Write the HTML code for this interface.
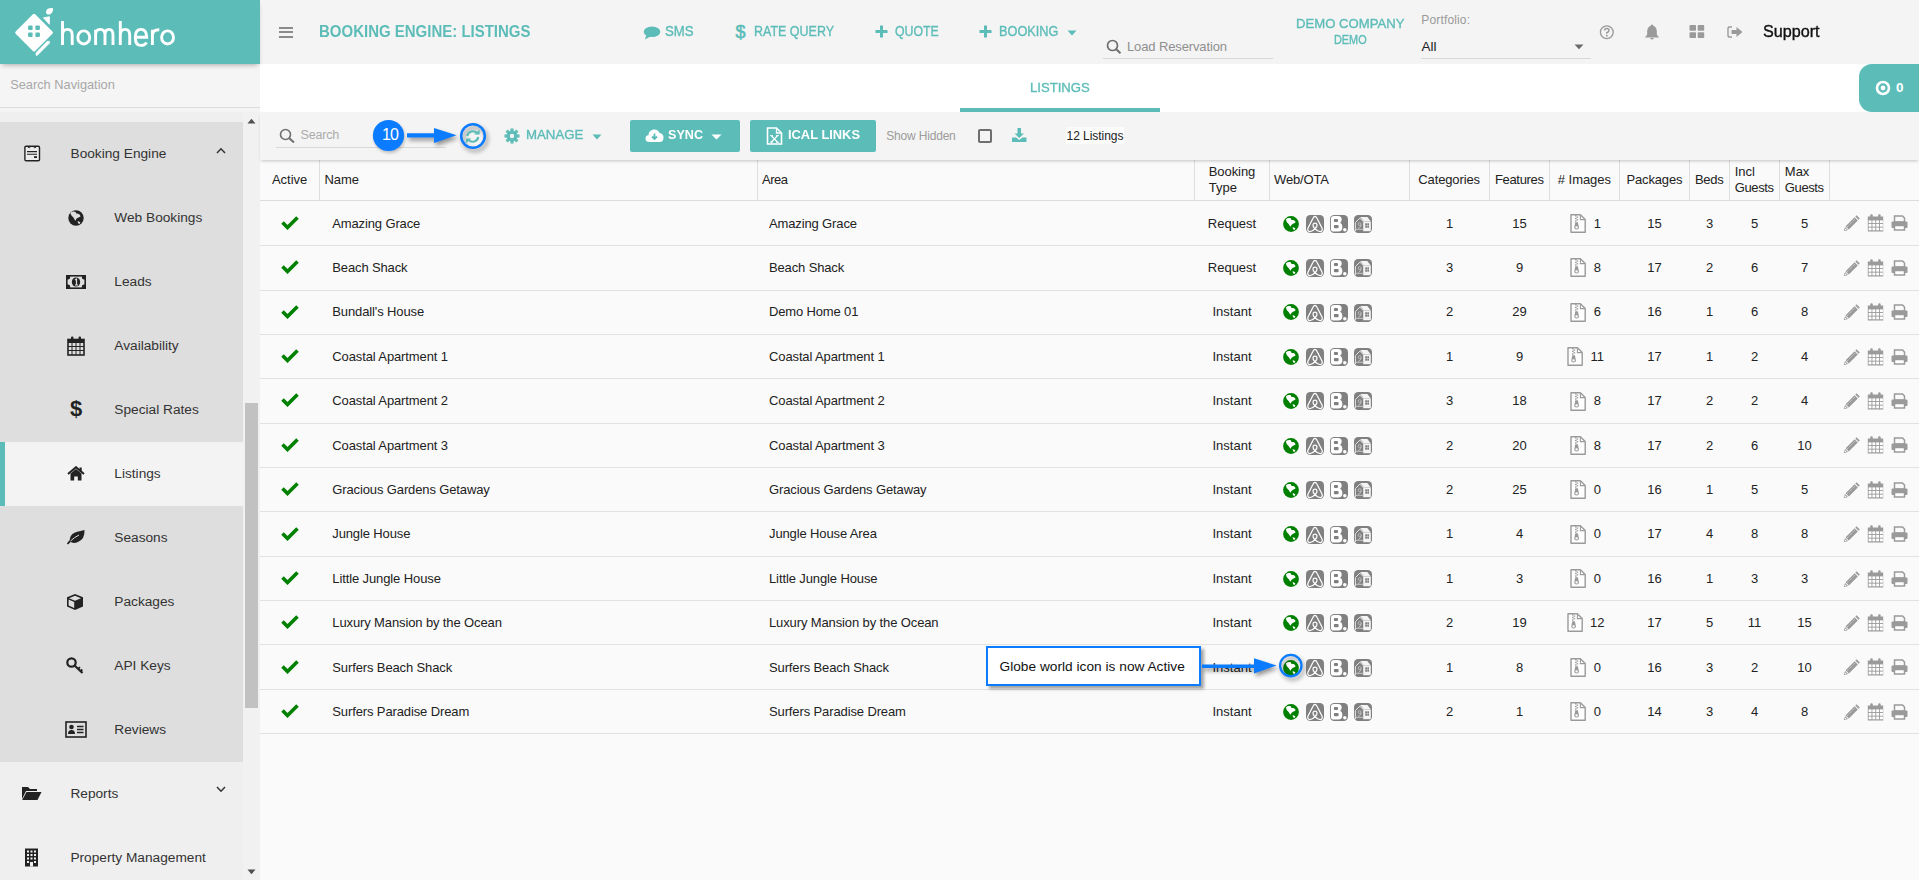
<!DOCTYPE html><html><head><meta charset="utf-8"><style>
html,body{margin:0;padding:0;}
body{width:1919px;height:880px;overflow:hidden;position:relative;background:#fafafa;font-family:"Liberation Sans",sans-serif;}
.a{position:absolute;display:block;}
.t{position:absolute;white-space:nowrap;line-height:1;}
</style></head><body>

<div class="a" style="left:260px;top:0px;width:1659px;height:64px;background:#f4f4f4;"></div>
<div class="a" style="left:260px;top:64px;width:1659px;height:48px;background:#ffffff;"></div>
<div class="a" style="left:260px;top:112px;width:1659px;height:48px;background:#f4f4f4;box-shadow:0 2px 3px -1px rgba(0,0,0,0.22);z-index:2;"></div>
<div class="a" style="left:260px;top:160px;width:1659px;height:720px;background:#fafafa;"></div>
<div class="a" style="left:0px;top:64px;width:260px;height:816px;background:#f5f5f5;"></div>
<div class="a" style="left:0px;top:107px;width:260px;height:1px;background:#dcdcdc;"></div>
<div class="a" style="left:0px;top:108px;width:260px;height:772px;background:#f4f4f4;"></div>
<div class="a" style="left:0px;top:112px;width:243px;height:768px;background:#efefef;"></div>
<div class="a" style="left:0px;top:122px;width:243px;height:640px;background:#dedede;"></div>
<div class="a" style="left:0px;top:442px;width:243px;height:64px;background:#f3f3f3;"></div>
<div class="a" style="left:0px;top:442px;width:5px;height:64px;background:#5cbcb8;"></div>
<div class="a" style="left:243px;top:112px;width:17px;height:768px;background:#f1f1f1;"></div>
<div class="a" style="left:245px;top:403px;width:13px;height:305px;background:#c1c1c1;"></div>
<svg class="a" style="left:247px;top:118px;" width="9" height="6" viewBox="0 0 9 6"><path d="M0.5 5.5 L4.5 0.8 L8.5 5.5Z" fill="#505050"/></svg>
<svg class="a" style="left:247px;top:869px;" width="9" height="6" viewBox="0 0 9 6"><path d="M0.5 0.5 L4.5 5.2 L8.5 0.5Z" fill="#505050"/></svg>
<div class="a" style="left:0px;top:0px;width:260px;height:64px;background:#5cbcb8;box-shadow:0 3px 5px -2px rgba(0,0,0,0.3);z-index:3;"></div>
<svg class="a" style="left:0;top:0;z-index:4" width="260" height="64" viewBox="0 0 260 64">
<path d="M16.8 32.6 L34.05 15.35 L51.3 32.6 L34.05 49.85 Z" fill="#fff" stroke="#fff" stroke-width="3.2" stroke-linejoin="round"/>
<path d="M43.4 17.8 L49.4 16.7 L49.4 24.3 Z" fill="#fff" stroke="#fff" stroke-width="0.8" stroke-linejoin="round"/>
<path d="M46.2 13.6 Q45.4 9.6 48.4 8.4 Q51 7.6 53.1 8.2 Q53.4 12.4 50.1 14.3 Q47.8 15.1 46.2 13.6Z" fill="#fff"/>
<path d="M47.2 41.3 L49.6 41.3 L49.6 43.1 L37.4 55.3 Q36.3 56.3 36 55 L36 52.7 Z" fill="#fff" stroke="#fff" stroke-width="0.6" stroke-linejoin="round"/>
<rect x="28.1" y="25.6" width="4.5" height="4.5" rx="1" fill="#5cbcb8"/>
<rect x="35.4" y="25.6" width="4.5" height="4.5" rx="1" fill="#5cbcb8"/>
<rect x="28.1" y="32.6" width="4.5" height="4.5" rx="1" fill="#5cbcb8"/>
<rect x="35.4" y="32.6" width="4.5" height="4.5" rx="1" fill="#5cbcb8"/>
<g fill="none" stroke="#fff" stroke-width="2.9">
<path d="M62.5 21 V45 M62.5 35.2 Q62.5 29.4 67.4 29.4 Q72.2 29.4 72.2 35.2 V45"/>
<ellipse cx="83.75" cy="37.4" rx="5.95" ry="6.55"/>
<path d="M95.6 29.8 V45 M95.6 35 Q95.6 29.4 100.2 29.4 Q105 29.4 105 35 V45 M105 35 Q105 29.4 109 29.4 Q113 29.4 113 35 V45"/>
<path d="M120.3 21 V45 M120.3 35.2 Q120.3 29.4 125.1 29.4 Q129.7 29.4 129.7 35.2 V45"/>
<path d="M135.3 37.3 H146.7 Q146.5 29.4 141 29.4 Q135.3 29.4 135.3 37.4 Q135.3 45.4 141 45.4 Q144.8 45.4 146.6 42.4"/>
<path d="M152.4 29.8 V45 M152.4 35.4 Q152.6 29.6 159.3 29.8"/>
<ellipse cx="167.55" cy="37.4" rx="5.95" ry="6.55"/>
</g>
</svg>
<div class="t" style="left:10.2px;top:79.36px;font-size:12.8px;color:#a8a8a8;">Search Navigation</div>
<div class="t" style="left:70.5px;top:146.90px;font-size:13.7px;color:#333;">Booking Engine</div>
<svg class="a" style="left:216px;top:147px;" width="10" height="7" viewBox="0 0 10 7"><path d="M1 6 L5 1.8 L9 6" fill="none" stroke="#333" stroke-width="1.5"/></svg>
<div class="t" style="left:114.3px;top:210.90px;font-size:13.7px;color:#333;">Web Bookings</div>
<div class="t" style="left:114.3px;top:274.90px;font-size:13.7px;color:#333;">Leads</div>
<div class="t" style="left:114.3px;top:338.90px;font-size:13.7px;color:#333;">Availability</div>
<div class="t" style="left:114.3px;top:402.90px;font-size:13.7px;color:#333;">Special Rates</div>
<div class="t" style="left:114.3px;top:466.90px;font-size:13.7px;color:#333;">Listings</div>
<div class="t" style="left:114.3px;top:530.90px;font-size:13.7px;color:#333;">Seasons</div>
<div class="t" style="left:114.3px;top:594.90px;font-size:13.7px;color:#333;">Packages</div>
<div class="t" style="left:114.3px;top:658.90px;font-size:13.7px;color:#333;">API Keys</div>
<div class="t" style="left:114.3px;top:722.90px;font-size:13.7px;color:#333;">Reviews</div>
<div class="t" style="left:70.4px;top:786.90px;font-size:13.7px;color:#333;">Reports</div>
<svg class="a" style="left:216px;top:786px;" width="10" height="7" viewBox="0 0 10 7"><path d="M1 1 L5 5.2 L9 1" fill="none" stroke="#333" stroke-width="1.5"/></svg>
<div class="t" style="left:70.4px;top:850.90px;font-size:13.7px;color:#333;">Property Management</div>
<svg class="a" style="left:24px;top:145px;" width="17" height="17" viewBox="0 0 17 17"><rect x="0.9" y="1.2" width="14.6" height="14.6" rx="1.2" fill="#ececec" stroke="#222" stroke-width="1.4"/><path d="M3.6 1.8 Q5.1 4 6.6 1.8 M9.4 1.8 Q10.9 4 12.4 1.8" fill="none" stroke="#222" stroke-width="0.9"/><path d="M3 6.6 H13 M3 9.3 H13" stroke="#222" stroke-width="1.1"/><rect x="10" y="11.2" width="3" height="1.8" fill="#222"/></svg>
<svg class="a" style="left:68px;top:210px;" width="16" height="16" viewBox="0 0 16 16"><circle cx="8" cy="8" r="7.7" fill="#222"/><path d="M2.2 3 Q4.5 1 7.5 1.9 L8.4 3.6 L10.2 3.8 L11.9 4.7 L12.5 6.6 L10 7.8 L8.3 8.8 L7.6 10.8 Q6.6 10 5.8 8 L3.5 5.6 Z" fill="#dedede"/><path d="M9.7 11.1 L12.4 12.2 L11.6 13.9 L10 13.2Z" fill="#dedede"/></svg>
<svg class="a" style="left:66px;top:275px;" width="20" height="14" viewBox="0 0 20 14"><rect x="0.8" y="0.8" width="18.4" height="12.4" fill="none" stroke="#222" stroke-width="1.6"/><path d="M0.8 4 Q3.5 4 3.5 0.8 M16.5 0.8 Q16.5 4 19.2 4 M0.8 10 Q3.5 10 3.5 13.2 M16.5 13.2 Q16.5 10 19.2 10" fill="none" stroke="#222" stroke-width="1.6"/><rect x="0.8" y="0.8" width="3" height="3" fill="#222"/><rect x="16.2" y="0.8" width="3" height="3" fill="#222"/><rect x="0.8" y="10.2" width="3" height="3" fill="#222"/><rect x="16.2" y="10.2" width="3" height="3" fill="#222"/><ellipse cx="10" cy="7" rx="4.2" ry="4.5" fill="#222"/><path d="M9 5 L10.5 4 V10 M9 10 H12" stroke="#dedede" stroke-width="1.2" fill="none"/></svg>
<svg class="a" style="left:67px;top:336px;" width="18" height="20" viewBox="0 0 18 20"><rect x="1" y="3.5" width="16" height="15.5" fill="none" stroke="#222" stroke-width="1.6"/><rect x="1" y="3.5" width="16" height="3.5" fill="#222"/><rect x="4" y="0.5" width="2.4" height="4.5" rx="1" fill="#222"/><rect x="11.6" y="0.5" width="2.4" height="4.5" rx="1" fill="#222"/><path d="M1 10.5 H17 M1 14.5 H17 M5 7 V19 M9 7 V19 M13 7 V19" stroke="#222" stroke-width="1"/></svg>
<div class="t" style="left:70px;top:398px;font-size:22px;font-weight:bold;color:#222;line-height:22px;">$</div>
<svg class="a" style="left:67px;top:466px;" width="18" height="15" viewBox="0 0 18 15"><path d="M1 8 L9 1.2 L17 8" fill="none" stroke="#222" stroke-width="2"/><path d="M3.5 7.5 L9 3 L14.5 7.5 V14.5 H10.8 V10.5 H7.2 V14.5 H3.5Z" fill="#222"/><rect x="12.5" y="1.5" width="2.2" height="4" fill="#222"/></svg>
<svg class="a" style="left:66px;top:529px;" width="20" height="16" viewBox="0 0 20 16"><path d="M18.5 1 Q19 10 12 13 Q7 15 4 12.5 Q3 6 9 3.5 Q13 2 18.5 1Z" fill="#222"/><path d="M1.5 15 Q6 9 13 5.5" fill="none" stroke="#222" stroke-width="1.6"/><path d="M4.5 12 Q8 8.5 13 6" fill="none" stroke="#dedede" stroke-width="1"/></svg>
<svg class="a" style="left:66px;top:593px;" width="18" height="18" viewBox="0 0 18 18"><path d="M9 1 L17 4.3 V13.5 L9 17 L1 13.5 V4.3Z" fill="#222"/><path d="M3 5.2 L9 7.8 L15 5.2 L9 2.8Z" fill="#dedede"/><path d="M9 9.5 V15" stroke="#dedede" stroke-width="0"/><path d="M2.6 6.6 L8.2 9 V15 L2.6 12.6Z" fill="#dedede"/></svg>
<svg class="a" style="left:66px;top:657px;" width="18" height="17" viewBox="0 0 18 17"><circle cx="5.5" cy="5.5" r="4.2" fill="none" stroke="#222" stroke-width="2.2"/><path d="M8.5 8.5 L16.5 16" stroke="#222" stroke-width="2.2"/><path d="M12 12 L14 10.2 M14.5 14.3 L16.3 12.5" stroke="#222" stroke-width="1.8"/></svg>
<svg class="a" style="left:65px;top:721px;" width="22" height="17" viewBox="0 0 22 17"><rect x="1" y="1" width="20" height="15" fill="none" stroke="#222" stroke-width="1.6"/><circle cx="6.5" cy="6" r="2.3" fill="#222"/><path d="M3 13 Q3 9 6.5 9 Q10 9 10 13Z" fill="#222"/><path d="M12 5.5 H18.5 M12 8.5 H18.5 M12 11.5 H18.5" stroke="#222" stroke-width="1.3"/></svg>
<svg class="a" style="left:21px;top:785px;" width="21" height="16" viewBox="0 0 21 16"><path d="M1 2 H7 L9 4 H16 V6 H5 L1 14Z" fill="#222"/><path d="M5.5 7 H20.5 L16.5 15 H1.2Z" fill="#222"/></svg>
<svg class="a" style="left:24px;top:848px;" width="15" height="19" viewBox="0 0 15 19"><rect x="1" y="0.5" width="13" height="18" fill="#222"/><g fill="#efefef"><rect x="3" y="2.5" width="2" height="2"/><rect x="6.5" y="2.5" width="2" height="2"/><rect x="10" y="2.5" width="2" height="2"/><rect x="3" y="6" width="2" height="2"/><rect x="6.5" y="6" width="2" height="2"/><rect x="10" y="6" width="2" height="2"/><rect x="3" y="9.5" width="2" height="2"/><rect x="6.5" y="9.5" width="2" height="2"/><rect x="10" y="9.5" width="2" height="2"/><rect x="3" y="13" width="2" height="2"/><rect x="10" y="13" width="2" height="2"/><rect x="6" y="14" width="3" height="4.5"/></g></svg>
<div class="a" style="left:279px;top:26.6px;width:14px;height:2px;background:#8a8a8a;"></div>
<div class="a" style="left:279px;top:31.3px;width:14px;height:2px;background:#8a8a8a;"></div>
<div class="a" style="left:279px;top:36px;width:14px;height:2px;background:#8a8a8a;"></div>
<div class="t" style="left:318.50px;top:24.16px;font-size:16px;color:#5cbcb8;font-weight:bold;transform:scaleX(0.9367);transform-origin:0 0;">BOOKING ENGINE: LISTINGS</div>
<svg class="a" style="left:643px;top:26px;" width="18" height="14" viewBox="0 0 18 14"><ellipse cx="9" cy="5.8" rx="8.3" ry="5.3" fill="#5cbcb8"/><path d="M3.5 9 L1.8 13.6 L7.5 10.5Z" fill="#5cbcb8"/></svg>
<div class="t" style="left:665.00px;top:24.15px;font-size:14px;color:#5cbcb8;-webkit-text-stroke:0.35px #5cbcb8;transform:scaleX(0.9427);transform-origin:0 0;">SMS</div>
<div class="t" style="left:735.5px;top:22.5px;font-size:18px;line-height:18px;color:#5cbcb8;-webkit-text-stroke:0.6px #5cbcb8;">$</div>
<div class="t" style="left:754.00px;top:24.15px;font-size:14px;color:#5cbcb8;-webkit-text-stroke:0.35px #5cbcb8;transform:scaleX(0.8916);transform-origin:0 0;">RATE QUERY</div>
<svg class="a" style="left:875px;top:25px;" width="13" height="13" viewBox="0 0 13 13"><path d="M6.5 0.5 V12.5 M0.5 6.5 H12.5" stroke="#5cbcb8" stroke-width="3"/></svg>
<div class="t" style="left:895.00px;top:24.40px;font-size:14px;color:#5cbcb8;-webkit-text-stroke:0.35px #5cbcb8;transform:scaleX(0.8788);transform-origin:0 0;">QUOTE</div>
<svg class="a" style="left:979px;top:25px;" width="13" height="13" viewBox="0 0 13 13"><path d="M6.5 0.5 V12.5 M0.5 6.5 H12.5" stroke="#5cbcb8" stroke-width="3"/></svg>
<div class="t" style="left:999.40px;top:24.40px;font-size:14px;color:#5cbcb8;-webkit-text-stroke:0.35px #5cbcb8;transform:scaleX(0.9091);transform-origin:0 0;">BOOKING</div>
<svg class="a" style="left:1067px;top:29.5px;" width="10" height="6" viewBox="0 0 10 6"><path d="M0.5 0.5 H9.5 L5 5.5Z" fill="#5cbcb8"/></svg>
<svg class="a" style="left:1106px;top:39px;" width="17" height="15" viewBox="0 0 17 15"><circle cx="6.5" cy="6.5" r="5" fill="none" stroke="#6f6f6f" stroke-width="1.7"/><path d="M10 10 L14.5 14.2" stroke="#6f6f6f" stroke-width="2"/></svg>
<div class="t" style="left:1127.00px;top:40.00px;font-size:13px;color:#8f8f8f;letter-spacing:-0.126px;">Load Reservation</div>
<div class="a" style="left:1103px;top:58px;width:170px;height:1px;background:#d8d8d8;"></div>
<div class="t" style="left:1296.00px;top:16.67px;font-size:13.5px;color:#5cbcb8;-webkit-text-stroke:0.35px #5cbcb8;transform:scaleX(0.9721);transform-origin:0 0;">DEMO COMPANY</div>
<div class="t" style="left:1334.40px;top:33.64px;font-size:12px;color:#5cbcb8;-webkit-text-stroke:0.35px #5cbcb8;transform:scaleX(0.9056);transform-origin:0 0;">DEMO</div>
<div class="t" style="left:1421.30px;top:13.84px;font-size:12px;color:#9a9a9a;letter-spacing:0.150px;">Portfolio:</div>
<div class="t" style="left:1421.50px;top:39.57px;font-size:13.5px;color:#222;">All</div>
<svg class="a" style="left:1574px;top:44px;" width="10" height="6" viewBox="0 0 10 6"><path d="M0.5 0.5 H9.5 L5 5.2Z" fill="#6a6a6a"/></svg>
<div class="a" style="left:1421px;top:58px;width:170px;height:1px;background:#d8d8d8;"></div>
<svg class="a" style="left:1599px;top:24.5px;" width="16" height="15" viewBox="0 0 16 15"><circle cx="7.8" cy="7.3" r="6.4" fill="none" stroke="#9a9a9a" stroke-width="1.3"/><path d="M5.6 5.6 Q5.6 3.4 7.8 3.4 Q10 3.4 10 5.4 Q10 6.8 7.8 7.6 V8.8" fill="none" stroke="#9a9a9a" stroke-width="1.5"/><circle cx="7.8" cy="10.8" r="0.95" fill="#9a9a9a"/></svg>
<svg class="a" style="left:1644px;top:23.5px;" width="16" height="17" viewBox="0 0 16 17"><path d="M8 1.5 Q12.5 2 12.8 7 V10.5 L15 13.5 H1 L3.2 10.5 V7 Q3.5 2 8 1.5Z" fill="#9a9a9a"/><circle cx="8" cy="1.8" r="1.2" fill="#9a9a9a"/><path d="M6 14 Q8 17.2 10 14Z" fill="#9a9a9a"/></svg>
<svg class="a" style="left:1689px;top:25px;" width="16" height="13" viewBox="0 0 16 13"><rect x="0.5" y="0" width="6.5" height="5.8" rx="0.8" fill="#9a9a9a"/><rect x="8.7" y="0" width="6.5" height="5.8" rx="0.8" fill="#9a9a9a"/><rect x="0.5" y="7.2" width="6.5" height="5.8" rx="0.8" fill="#9a9a9a"/><rect x="8.7" y="7.2" width="6.5" height="5.8" rx="0.8" fill="#9a9a9a"/></svg>
<svg class="a" style="left:1727px;top:26px;" width="17" height="13" viewBox="0 0 17 13"><path d="M5 1 H2.2 Q1 1 1 2.5 V9.5 Q1 11 2.2 11 H5" fill="none" stroke="#9a9a9a" stroke-width="1.4"/><path d="M4.5 4 H9.5 V1 L15.5 6 L9.5 11 V8 H4.5Z" fill="#9a9a9a"/></svg>
<div class="t" style="left:1763.40px;top:24.16px;font-size:16px;color:#111;-webkit-text-stroke:0.35px #111;transform:scaleX(1.0101);transform-origin:0 0;">Support</div>
<div class="t" style="left:1030.25px;top:80.57px;font-size:13.5px;color:#5cbcb8;-webkit-text-stroke:0.35px #5cbcb8;transform:scaleX(0.9712);transform-origin:0 0;">LISTINGS</div>
<div class="a" style="left:960px;top:108px;width:200px;height:4px;background:#5cbcb8;"></div>
<div class="a" style="left:1859px;top:64px;width:60px;height:48px;background:#5cbcb8;border-radius:13px 0 0 13px;"></div>
<svg class="a" style="left:1875px;top:80px;" width="16" height="16" viewBox="0 0 16 16"><circle cx="8" cy="8" r="6" fill="none" stroke="#fff" stroke-width="2.6"/><circle cx="8" cy="8" r="2.4" fill="#fff"/></svg>
<div class="t" style="left:1896.00px;top:80.57px;font-size:13.5px;color:#fff;font-weight:bold;">0</div>
<div class="a" style="left:0;top:0;width:1919px;height:880px;z-index:5;pointer-events:none">
<svg class="a" style="left:279px;top:128px;" width="17" height="15" viewBox="0 0 17 15"><circle cx="6.5" cy="6.5" r="5" fill="none" stroke="#6f6f6f" stroke-width="1.6"/><path d="M10 10 L15 14.5" stroke="#6f6f6f" stroke-width="2"/></svg>
<div class="t" style="left:300.50px;top:129.02px;font-size:12.5px;color:#ababab;letter-spacing:-0.160px;">Search</div>
<div class="a" style="left:276px;top:147px;width:170px;height:1px;background:#d8d8d8;"></div>
<svg class="a" style="left:504px;top:128px;" width="16" height="16" viewBox="0 0 16 16"><g transform="translate(8 8)"><circle r="5.2" fill="#5cbcb8"/><g fill="#5cbcb8"><rect x="-1.6" y="-7.5" width="3.2" height="4" transform="rotate(0)"/><rect x="-1.6" y="-7.5" width="3.2" height="4" transform="rotate(45)"/><rect x="-1.6" y="-7.5" width="3.2" height="4" transform="rotate(90)"/><rect x="-1.6" y="-7.5" width="3.2" height="4" transform="rotate(135)"/><rect x="-1.6" y="-7.5" width="3.2" height="4" transform="rotate(180)"/><rect x="-1.6" y="-7.5" width="3.2" height="4" transform="rotate(225)"/><rect x="-1.6" y="-7.5" width="3.2" height="4" transform="rotate(270)"/><rect x="-1.6" y="-7.5" width="3.2" height="4" transform="rotate(315)"/></g><circle r="2.2" fill="#f4f4f4"/></g></svg>
<div class="t" style="left:525.60px;top:128.27px;font-size:13.5px;color:#5cbcb8;-webkit-text-stroke:0.35px #5cbcb8;transform:scaleX(0.9793);transform-origin:0 0;">MANAGE</div>
<svg class="a" style="left:591.5px;top:133.5px;" width="10" height="6" viewBox="0 0 10 6"><path d="M0.5 0.5 H9.5 L5 5.5Z" fill="#5cbcb8"/></svg>
<div class="a" style="left:630px;top:120px;width:110px;height:32px;background:#5cbcb8;border-radius:2px;"></div>
<svg class="a" style="left:645px;top:128px;" width="19" height="15" viewBox="0 0 19 15"><path d="M4.5 14 Q0.5 14 0.5 10.5 Q0.5 7.5 3.5 7 Q3.5 2.5 8.5 1.5 Q13 1 14.5 5 Q18.5 5.5 18.5 9.5 Q18.5 14 14.5 14Z" fill="#fff"/><path d="M9.5 5.5 V10.5 M7 8.5 L9.5 11 L12 8.5" fill="none" stroke="#5cbcb8" stroke-width="1.8"/></svg>
<div class="t" style="left:668.00px;top:128.27px;font-size:13.5px;color:#fff;font-weight:bold;transform:scaleX(0.9333);transform-origin:0 0;">SYNC</div>
<svg class="a" style="left:711px;top:133.5px;" width="11" height="6" viewBox="0 0 11 6"><path d="M0.5 0.5 H10.5 L5.5 5.5Z" fill="#fff"/></svg>
<div class="a" style="left:750px;top:120px;width:126px;height:32px;background:#5cbcb8;border-radius:2px;"></div>
<svg class="a" style="left:766px;top:127px;" width="17" height="18" viewBox="0 0 17 18"><path d="M1.5 1 H10.5 L15.5 6 V17 H1.5Z" fill="none" stroke="#fff" stroke-width="1.6"/><path d="M10.5 1 V6 H15.5" fill="none" stroke="#fff" stroke-width="1.3"/><path d="M5.2 8.6 L11.6 15.2 M11.6 8.6 L5.2 15.2" stroke="#fff" stroke-width="1.3"/><path d="M4 8.6 H7 M10 8.6 H13 M4 15.2 H7 M10 15.2 H13" stroke="#fff" stroke-width="0.9"/></svg>
<div class="t" style="left:787.70px;top:128.37px;font-size:13.5px;color:#fff;font-weight:bold;transform:scaleX(0.9536);transform-origin:0 0;">ICAL LINKS</div>
<div class="t" style="left:886.30px;top:129.54px;font-size:12px;color:#9b9b9b;letter-spacing:-0.188px;">Show Hidden</div>
<div class="a" style="left:978px;top:129px;width:10px;height:10px;border:2px solid #6e6e6e;border-radius:2px;"></div>
<svg class="a" style="left:1011px;top:127px;" width="17" height="16" viewBox="0 0 17 16"><path d="M6.5 1 H10 V6.5 H13 L8.25 11 L3.5 6.5 H6.5Z" fill="#5cbcb8"/><path d="M1 10.5 H5 L8.25 13 L11.5 10.5 H15.5 V15 H1Z" fill="#5cbcb8"/></svg>
<div class="a" style="left:1066px;top:127px;width:58px;height:17px;background:#fbfbfb;"></div>
<div class="t" style="left:1066.50px;top:129.54px;font-size:12px;color:#222;letter-spacing:-0.037px;">12 Listings</div>
</div>
<div class="a" style="left:319px;top:160px;width:1px;height:40px;background:#dedede;"></div>
<div class="a" style="left:757px;top:160px;width:1px;height:40px;background:#dedede;"></div>
<div class="a" style="left:1194px;top:160px;width:1px;height:40px;background:#dedede;"></div>
<div class="a" style="left:1269px;top:160px;width:1px;height:40px;background:#dedede;"></div>
<div class="a" style="left:1409px;top:160px;width:1px;height:40px;background:#dedede;"></div>
<div class="a" style="left:1489px;top:160px;width:1px;height:40px;background:#dedede;"></div>
<div class="a" style="left:1549px;top:160px;width:1px;height:40px;background:#dedede;"></div>
<div class="a" style="left:1619px;top:160px;width:1px;height:40px;background:#dedede;"></div>
<div class="a" style="left:1689px;top:160px;width:1px;height:40px;background:#dedede;"></div>
<div class="a" style="left:1729px;top:160px;width:1px;height:40px;background:#dedede;"></div>
<div class="a" style="left:1779px;top:160px;width:1px;height:40px;background:#dedede;"></div>
<div class="a" style="left:1829px;top:160px;width:1px;height:40px;background:#dedede;"></div>
<div class="a" style="left:260px;top:200px;width:1659px;height:1px;background:#dcdcdc;"></div>
<div class="t" style="left:271.90px;top:173.00px;font-size:13px;color:#222;letter-spacing:0.000px;">Active</div>
<div class="t" style="left:324.40px;top:173.00px;font-size:13px;color:#222;">Name</div>
<div class="t" style="left:762.00px;top:173.00px;font-size:13px;color:#222;letter-spacing:-0.490px;">Area</div>
<div class="t" style="left:1208.70px;top:164.80px;font-size:13px;color:#222;letter-spacing:-0.064px;">Booking</div>
<div class="t" style="left:1208.70px;top:181.00px;font-size:13px;color:#222;">Type</div>
<div class="t" style="left:1274.00px;top:173.00px;font-size:13px;color:#222;letter-spacing:-0.143px;">Web/OTA</div>
<div class="t" style="left:1418.30px;top:173.00px;font-size:13px;color:#222;letter-spacing:-0.130px;">Categories</div>
<div class="t" style="left:1494.90px;top:173.00px;font-size:13px;color:#222;letter-spacing:-0.314px;">Features</div>
<div class="t" style="left:1557.80px;top:173.00px;font-size:13px;color:#222;letter-spacing:-0.038px;"># Images</div>
<div class="t" style="left:1626.50px;top:173.00px;font-size:13px;color:#222;letter-spacing:-0.157px;">Packages</div>
<div class="t" style="left:1695.00px;top:173.00px;font-size:13px;color:#222;letter-spacing:-0.309px;">Beds</div>
<div class="t" style="left:1734.70px;top:164.80px;font-size:13px;color:#222;">Incl</div>
<div class="t" style="left:1734.70px;top:181.00px;font-size:13px;color:#222;letter-spacing:-0.377px;">Guests</div>
<div class="t" style="left:1784.80px;top:164.80px;font-size:13px;color:#222;">Max</div>
<div class="t" style="left:1784.80px;top:181.00px;font-size:13px;color:#222;letter-spacing:-0.377px;">Guests</div>
<div class="a" style="left:260px;top:245px;width:1659px;height:1px;background:#e2e2e2;"></div>
<div class="a" style="left:260px;top:290px;width:1659px;height:1px;background:#e2e2e2;"></div>
<div class="a" style="left:260px;top:334px;width:1659px;height:1px;background:#e2e2e2;"></div>
<div class="a" style="left:260px;top:378px;width:1659px;height:1px;background:#e2e2e2;"></div>
<div class="a" style="left:260px;top:423px;width:1659px;height:1px;background:#e2e2e2;"></div>
<div class="a" style="left:260px;top:467px;width:1659px;height:1px;background:#e2e2e2;"></div>
<div class="a" style="left:260px;top:511px;width:1659px;height:1px;background:#e2e2e2;"></div>
<div class="a" style="left:260px;top:556px;width:1659px;height:1px;background:#e2e2e2;"></div>
<div class="a" style="left:260px;top:600px;width:1659px;height:1px;background:#e2e2e2;"></div>
<div class="a" style="left:260px;top:644px;width:1659px;height:1px;background:#e2e2e2;"></div>
<div class="a" style="left:260px;top:689px;width:1659px;height:1px;background:#e2e2e2;"></div>
<div class="a" style="left:260px;top:733px;width:1659px;height:1px;background:#e2e2e2;"></div>
<svg class="a" style="left:281px;top:215px;" width="18" height="15" viewBox="0 0 18 15"><path d="M1.5 7.5 L6.5 12.5 L16.5 2.5" fill="none" stroke="#008000" stroke-width="3.6"/></svg>
<div class="t" style="left:332.30px;top:216.60px;font-size:13px;color:#222;letter-spacing:-0.134px;">Amazing Grace</div>
<div class="t" style="left:769.00px;top:216.60px;font-size:13px;color:#222;letter-spacing:-0.134px;">Amazing Grace</div>
<div class="t" style="left:1207.79px;top:216.60px;font-size:13px;color:#222;">Request</div>
<svg class="a" style="left:1283px;top:216px;" width="16" height="16" viewBox="0 0 16 16"><circle cx="8" cy="8" r="7.9" fill="#008000"/><path d="M2.8 3.2 Q4.8 1.6 7.5 2 L8.6 3.9 L10.4 4.1 L12.1 5 L12.4 6.8 L10 7.8 L8.4 9 L7.6 10.8 Q6.8 9.8 5.8 8.2 L3.7 5.9 Z" fill="#fff"/><path d="M9.7 11.1 L12.4 12.2 L11.6 13.9 L10 13.2Z" fill="#fff"/></svg>
<svg class="a" style="left:1306px;top:215px;" width="18" height="18" viewBox="0 0 18 18"><rect x="0" y="0" width="18" height="18" rx="4.2" fill="#808080"/><path d="M9 13.8 Q6.6 11.2 7 9.6 Q7.3 8.1 9 8.1 Q10.7 8.1 11 9.6 Q11.4 11.2 9 13.8 Q6 16.8 3.6 16.6 Q1.2 16.2 1.9 13.2 L7 3.2 Q7.9 1.3 9 1.3 Q10.1 1.3 11 3.2 L16.1 13.2 Q16.8 16.2 14.4 16.6 Q12 16.8 9 13.8Z" fill="none" stroke="#fff" stroke-width="1.25" stroke-linejoin="round"/></svg>
<svg class="a" style="left:1330px;top:215px;" width="18" height="18" viewBox="0 0 18 18"><rect x="0" y="0" width="18" height="18" rx="4.2" fill="#808080"/><path d="M0.9 4.4 Q0.9 1 4.2 1 H8.2 Q11.7 1 11.7 4.6 Q11.7 6.8 10.1 7.8 Q12.4 8.8 12.4 12 Q12.4 16.6 8.2 16.6 H4.2 Q0.9 16.6 0.9 13.4Z" fill="#fff"/><rect x="3.9" y="3.9" width="4.1" height="3.2" rx="1" fill="#808080"/><rect x="3.9" y="10.1" width="4.7" height="3.2" rx="1" fill="#808080"/><circle cx="14.8" cy="14.8" r="1.75" fill="#fff"/></svg>
<svg class="a" style="left:1354px;top:215px;" width="18" height="18" viewBox="0 0 18 18"><rect x="0" y="0" width="18" height="18" rx="4.2" fill="#808080"/><path d="M6.2 1.9 H13.3 L16.8 6.6 H9.9Z" fill="#f4f4f4"/><rect x="9.7" y="6.6" width="7.1" height="9.6" fill="#f4f4f4"/><g fill="#808080"><rect x="11.2" y="8.3" width="1.8" height="2.1"/><rect x="13.3" y="8.3" width="1.7" height="2.1"/><rect x="11.2" y="10.7" width="1.8" height="2"/><rect x="13.3" y="10.7" width="1.7" height="2"/></g><path d="M1.4 16.2 V7.6 L5.9 3.1 L9.7 7 V16.2" fill="none" stroke="#f0f0f0" stroke-width="0.9"/><path d="M1.4 14.3 H9.7" stroke="#d8d8d8" stroke-width="0.8"/><circle cx="5.7" cy="9.2" r="1.5" fill="none" stroke="#c8c8c8" stroke-width="0.8"/><path d="M7.2 9.4 Q7.2 12.6 4 13.6" fill="none" stroke="#c8c8c8" stroke-width="0.8"/></svg>
<div class="t" style="left:1445.89px;top:216.60px;font-size:13px;color:#222;">1</div>
<div class="t" style="left:1512.27px;top:216.60px;font-size:13px;color:#222;">15</div>
<svg class="a" style="left:1570px;top:214px;" width="16" height="19" viewBox="0 0 16 19"><path d="M1 0.8 H10.4 L15.2 5.6 V18.2 H1Z" fill="#fff" stroke="#9a9a9a" stroke-width="1.4" stroke-linejoin="round"/><path d="M10.4 1.2 V5.6 H14.8" fill="none" stroke="#9a9a9a" stroke-width="1.1"/><g fill="#9a9a9a"><rect x="5" y="1.2" width="1.6" height="1.3"/><rect x="6.6" y="2.5" width="1.6" height="1.3"/><rect x="5" y="3.8" width="1.6" height="1.3"/><rect x="6.6" y="5.1" width="1.6" height="1.3"/><rect x="5" y="6.4" width="1.6" height="1.3"/></g><path d="M5.3 8.2 H7.9 L8.9 13.2 Q9 15.6 6.6 15.6 Q4.2 15.6 4.3 13.2Z" fill="#9a9a9a"/><ellipse cx="6.6" cy="13.4" rx="1.3" ry="1.1" fill="#fff"/></svg>
<div class="t" style="left:1593.64px;top:216.60px;font-size:13px;color:#222;">1</div>
<div class="t" style="left:1647.27px;top:216.60px;font-size:13px;color:#222;">15</div>
<div class="t" style="left:1705.89px;top:216.60px;font-size:13px;color:#222;">3</div>
<div class="t" style="left:1750.89px;top:216.60px;font-size:13px;color:#222;">5</div>
<div class="t" style="left:1800.89px;top:216.60px;font-size:13px;color:#222;">5</div>
<svg class="a" style="left:1843px;top:215px;" width="17" height="16" viewBox="0 0 17 16"><path d="M2.6 11.2 L11.6 2.2 L14.8 5.4 L5.8 14.4Z" fill="#9a9a9a"/><path d="M12.3 1.5 L13.6 0.2 L16.8 3.4 L15.5 4.7Z" fill="#9a9a9a"/><path d="M2.1 12 L0.6 16.4 L5 14.9Z" fill="#9a9a9a"/><path d="M2.2 13.4 L1.6 15.4 L3.6 14.8Z" fill="#fff"/><path d="M4.2 11.8 L12 4" stroke="#fff" stroke-width="0.6" stroke-dasharray="1 1"/></svg>
<svg class="a" style="left:1867px;top:214px;" width="17" height="18" viewBox="0 0 17 18"><rect x="0.8" y="2.5" width="15.4" height="15" fill="#9a9a9a"/><g fill="#fff"><rect x="1.6" y="6.4" width="2.9" height="2.7"/><rect x="5.4" y="6.4" width="2.9" height="2.7"/><rect x="9.2" y="6.4" width="2.9" height="2.7"/><rect x="13.0" y="6.4" width="2.9" height="2.7"/><rect x="1.6" y="10.0" width="2.9" height="2.7"/><rect x="5.4" y="10.0" width="2.9" height="2.7"/><rect x="9.2" y="10.0" width="2.9" height="2.7"/><rect x="13.0" y="10.0" width="2.9" height="2.7"/><rect x="1.6" y="13.6" width="2.9" height="2.7"/><rect x="5.4" y="13.6" width="2.9" height="2.7"/><rect x="9.2" y="13.6" width="2.9" height="2.7"/><rect x="13.0" y="13.6" width="2.9" height="2.7"/></g><rect x="3.3" y="0.3" width="2.4" height="4" rx="1" fill="#9a9a9a"/><rect x="11.2" y="0.3" width="2.4" height="4" rx="1" fill="#9a9a9a"/></svg>
<svg class="a" style="left:1890.5px;top:215px;" width="17" height="16" viewBox="0 0 17 16"><path d="M3.5 1 H11.5 L13.5 3 V7 H3.5Z" fill="none" stroke="#9a9a9a" stroke-width="1.5"/><rect x="0.5" y="6.5" width="16" height="6.5" rx="1" fill="#9a9a9a"/><rect x="3.5" y="10.5" width="10" height="4.5" fill="#fff" stroke="#9a9a9a" stroke-width="1.5"/></svg>
<svg class="a" style="left:281px;top:259px;" width="18" height="15" viewBox="0 0 18 15"><path d="M1.5 7.5 L6.5 12.5 L16.5 2.5" fill="none" stroke="#008000" stroke-width="3.6"/></svg>
<div class="t" style="left:332.30px;top:261.00px;font-size:13px;color:#222;letter-spacing:-0.138px;">Beach Shack</div>
<div class="t" style="left:769.00px;top:261.00px;font-size:13px;color:#222;letter-spacing:-0.138px;">Beach Shack</div>
<div class="t" style="left:1207.79px;top:261.00px;font-size:13px;color:#222;">Request</div>
<svg class="a" style="left:1283px;top:260px;" width="16" height="16" viewBox="0 0 16 16"><circle cx="8" cy="8" r="7.9" fill="#008000"/><path d="M2.8 3.2 Q4.8 1.6 7.5 2 L8.6 3.9 L10.4 4.1 L12.1 5 L12.4 6.8 L10 7.8 L8.4 9 L7.6 10.8 Q6.8 9.8 5.8 8.2 L3.7 5.9 Z" fill="#fff"/><path d="M9.7 11.1 L12.4 12.2 L11.6 13.9 L10 13.2Z" fill="#fff"/></svg>
<svg class="a" style="left:1306px;top:259px;" width="18" height="18" viewBox="0 0 18 18"><rect x="0" y="0" width="18" height="18" rx="4.2" fill="#808080"/><path d="M9 13.8 Q6.6 11.2 7 9.6 Q7.3 8.1 9 8.1 Q10.7 8.1 11 9.6 Q11.4 11.2 9 13.8 Q6 16.8 3.6 16.6 Q1.2 16.2 1.9 13.2 L7 3.2 Q7.9 1.3 9 1.3 Q10.1 1.3 11 3.2 L16.1 13.2 Q16.8 16.2 14.4 16.6 Q12 16.8 9 13.8Z" fill="none" stroke="#fff" stroke-width="1.25" stroke-linejoin="round"/></svg>
<svg class="a" style="left:1330px;top:259px;" width="18" height="18" viewBox="0 0 18 18"><rect x="0" y="0" width="18" height="18" rx="4.2" fill="#808080"/><path d="M0.9 4.4 Q0.9 1 4.2 1 H8.2 Q11.7 1 11.7 4.6 Q11.7 6.8 10.1 7.8 Q12.4 8.8 12.4 12 Q12.4 16.6 8.2 16.6 H4.2 Q0.9 16.6 0.9 13.4Z" fill="#fff"/><rect x="3.9" y="3.9" width="4.1" height="3.2" rx="1" fill="#808080"/><rect x="3.9" y="10.1" width="4.7" height="3.2" rx="1" fill="#808080"/><circle cx="14.8" cy="14.8" r="1.75" fill="#fff"/></svg>
<svg class="a" style="left:1354px;top:259px;" width="18" height="18" viewBox="0 0 18 18"><rect x="0" y="0" width="18" height="18" rx="4.2" fill="#808080"/><path d="M6.2 1.9 H13.3 L16.8 6.6 H9.9Z" fill="#f4f4f4"/><rect x="9.7" y="6.6" width="7.1" height="9.6" fill="#f4f4f4"/><g fill="#808080"><rect x="11.2" y="8.3" width="1.8" height="2.1"/><rect x="13.3" y="8.3" width="1.7" height="2.1"/><rect x="11.2" y="10.7" width="1.8" height="2"/><rect x="13.3" y="10.7" width="1.7" height="2"/></g><path d="M1.4 16.2 V7.6 L5.9 3.1 L9.7 7 V16.2" fill="none" stroke="#f0f0f0" stroke-width="0.9"/><path d="M1.4 14.3 H9.7" stroke="#d8d8d8" stroke-width="0.8"/><circle cx="5.7" cy="9.2" r="1.5" fill="none" stroke="#c8c8c8" stroke-width="0.8"/><path d="M7.2 9.4 Q7.2 12.6 4 13.6" fill="none" stroke="#c8c8c8" stroke-width="0.8"/></svg>
<div class="t" style="left:1445.89px;top:261.00px;font-size:13px;color:#222;">3</div>
<div class="t" style="left:1515.89px;top:261.00px;font-size:13px;color:#222;">9</div>
<svg class="a" style="left:1570px;top:258px;" width="16" height="19" viewBox="0 0 16 19"><path d="M1 0.8 H10.4 L15.2 5.6 V18.2 H1Z" fill="#fff" stroke="#9a9a9a" stroke-width="1.4" stroke-linejoin="round"/><path d="M10.4 1.2 V5.6 H14.8" fill="none" stroke="#9a9a9a" stroke-width="1.1"/><g fill="#9a9a9a"><rect x="5" y="1.2" width="1.6" height="1.3"/><rect x="6.6" y="2.5" width="1.6" height="1.3"/><rect x="5" y="3.8" width="1.6" height="1.3"/><rect x="6.6" y="5.1" width="1.6" height="1.3"/><rect x="5" y="6.4" width="1.6" height="1.3"/></g><path d="M5.3 8.2 H7.9 L8.9 13.2 Q9 15.6 6.6 15.6 Q4.2 15.6 4.3 13.2Z" fill="#9a9a9a"/><ellipse cx="6.6" cy="13.4" rx="1.3" ry="1.1" fill="#fff"/></svg>
<div class="t" style="left:1593.64px;top:261.00px;font-size:13px;color:#222;">8</div>
<div class="t" style="left:1647.27px;top:261.00px;font-size:13px;color:#222;">17</div>
<div class="t" style="left:1705.89px;top:261.00px;font-size:13px;color:#222;">2</div>
<div class="t" style="left:1750.89px;top:261.00px;font-size:13px;color:#222;">6</div>
<div class="t" style="left:1800.89px;top:261.00px;font-size:13px;color:#222;">7</div>
<svg class="a" style="left:1843px;top:260px;" width="17" height="16" viewBox="0 0 17 16"><path d="M2.6 11.2 L11.6 2.2 L14.8 5.4 L5.8 14.4Z" fill="#9a9a9a"/><path d="M12.3 1.5 L13.6 0.2 L16.8 3.4 L15.5 4.7Z" fill="#9a9a9a"/><path d="M2.1 12 L0.6 16.4 L5 14.9Z" fill="#9a9a9a"/><path d="M2.2 13.4 L1.6 15.4 L3.6 14.8Z" fill="#fff"/><path d="M4.2 11.8 L12 4" stroke="#fff" stroke-width="0.6" stroke-dasharray="1 1"/></svg>
<svg class="a" style="left:1867px;top:259px;" width="17" height="18" viewBox="0 0 17 18"><rect x="0.8" y="2.5" width="15.4" height="15" fill="#9a9a9a"/><g fill="#fff"><rect x="1.6" y="6.4" width="2.9" height="2.7"/><rect x="5.4" y="6.4" width="2.9" height="2.7"/><rect x="9.2" y="6.4" width="2.9" height="2.7"/><rect x="13.0" y="6.4" width="2.9" height="2.7"/><rect x="1.6" y="10.0" width="2.9" height="2.7"/><rect x="5.4" y="10.0" width="2.9" height="2.7"/><rect x="9.2" y="10.0" width="2.9" height="2.7"/><rect x="13.0" y="10.0" width="2.9" height="2.7"/><rect x="1.6" y="13.6" width="2.9" height="2.7"/><rect x="5.4" y="13.6" width="2.9" height="2.7"/><rect x="9.2" y="13.6" width="2.9" height="2.7"/><rect x="13.0" y="13.6" width="2.9" height="2.7"/></g><rect x="3.3" y="0.3" width="2.4" height="4" rx="1" fill="#9a9a9a"/><rect x="11.2" y="0.3" width="2.4" height="4" rx="1" fill="#9a9a9a"/></svg>
<svg class="a" style="left:1890.5px;top:260px;" width="17" height="16" viewBox="0 0 17 16"><path d="M3.5 1 H11.5 L13.5 3 V7 H3.5Z" fill="none" stroke="#9a9a9a" stroke-width="1.5"/><rect x="0.5" y="6.5" width="16" height="6.5" rx="1" fill="#9a9a9a"/><rect x="3.5" y="10.5" width="10" height="4.5" fill="#fff" stroke="#9a9a9a" stroke-width="1.5"/></svg>
<svg class="a" style="left:281px;top:304px;" width="18" height="15" viewBox="0 0 18 15"><path d="M1.5 7.5 L6.5 12.5 L16.5 2.5" fill="none" stroke="#008000" stroke-width="3.6"/></svg>
<div class="t" style="left:332.30px;top:305.40px;font-size:13px;color:#222;letter-spacing:-0.120px;">Bundall's House</div>
<div class="t" style="left:769.00px;top:305.40px;font-size:13px;color:#222;letter-spacing:-0.149px;">Demo Home 01</div>
<div class="t" style="left:1212.49px;top:305.40px;font-size:13px;color:#222;">Instant</div>
<svg class="a" style="left:1283px;top:304px;" width="16" height="16" viewBox="0 0 16 16"><circle cx="8" cy="8" r="7.9" fill="#008000"/><path d="M2.8 3.2 Q4.8 1.6 7.5 2 L8.6 3.9 L10.4 4.1 L12.1 5 L12.4 6.8 L10 7.8 L8.4 9 L7.6 10.8 Q6.8 9.8 5.8 8.2 L3.7 5.9 Z" fill="#fff"/><path d="M9.7 11.1 L12.4 12.2 L11.6 13.9 L10 13.2Z" fill="#fff"/></svg>
<svg class="a" style="left:1306px;top:304px;" width="18" height="18" viewBox="0 0 18 18"><rect x="0" y="0" width="18" height="18" rx="4.2" fill="#808080"/><path d="M9 13.8 Q6.6 11.2 7 9.6 Q7.3 8.1 9 8.1 Q10.7 8.1 11 9.6 Q11.4 11.2 9 13.8 Q6 16.8 3.6 16.6 Q1.2 16.2 1.9 13.2 L7 3.2 Q7.9 1.3 9 1.3 Q10.1 1.3 11 3.2 L16.1 13.2 Q16.8 16.2 14.4 16.6 Q12 16.8 9 13.8Z" fill="none" stroke="#fff" stroke-width="1.25" stroke-linejoin="round"/></svg>
<svg class="a" style="left:1330px;top:304px;" width="18" height="18" viewBox="0 0 18 18"><rect x="0" y="0" width="18" height="18" rx="4.2" fill="#808080"/><path d="M0.9 4.4 Q0.9 1 4.2 1 H8.2 Q11.7 1 11.7 4.6 Q11.7 6.8 10.1 7.8 Q12.4 8.8 12.4 12 Q12.4 16.6 8.2 16.6 H4.2 Q0.9 16.6 0.9 13.4Z" fill="#fff"/><rect x="3.9" y="3.9" width="4.1" height="3.2" rx="1" fill="#808080"/><rect x="3.9" y="10.1" width="4.7" height="3.2" rx="1" fill="#808080"/><circle cx="14.8" cy="14.8" r="1.75" fill="#fff"/></svg>
<svg class="a" style="left:1354px;top:304px;" width="18" height="18" viewBox="0 0 18 18"><rect x="0" y="0" width="18" height="18" rx="4.2" fill="#808080"/><path d="M6.2 1.9 H13.3 L16.8 6.6 H9.9Z" fill="#f4f4f4"/><rect x="9.7" y="6.6" width="7.1" height="9.6" fill="#f4f4f4"/><g fill="#808080"><rect x="11.2" y="8.3" width="1.8" height="2.1"/><rect x="13.3" y="8.3" width="1.7" height="2.1"/><rect x="11.2" y="10.7" width="1.8" height="2"/><rect x="13.3" y="10.7" width="1.7" height="2"/></g><path d="M1.4 16.2 V7.6 L5.9 3.1 L9.7 7 V16.2" fill="none" stroke="#f0f0f0" stroke-width="0.9"/><path d="M1.4 14.3 H9.7" stroke="#d8d8d8" stroke-width="0.8"/><circle cx="5.7" cy="9.2" r="1.5" fill="none" stroke="#c8c8c8" stroke-width="0.8"/><path d="M7.2 9.4 Q7.2 12.6 4 13.6" fill="none" stroke="#c8c8c8" stroke-width="0.8"/></svg>
<div class="t" style="left:1445.89px;top:305.40px;font-size:13px;color:#222;">2</div>
<div class="t" style="left:1512.27px;top:305.40px;font-size:13px;color:#222;">29</div>
<svg class="a" style="left:1570px;top:303px;" width="16" height="19" viewBox="0 0 16 19"><path d="M1 0.8 H10.4 L15.2 5.6 V18.2 H1Z" fill="#fff" stroke="#9a9a9a" stroke-width="1.4" stroke-linejoin="round"/><path d="M10.4 1.2 V5.6 H14.8" fill="none" stroke="#9a9a9a" stroke-width="1.1"/><g fill="#9a9a9a"><rect x="5" y="1.2" width="1.6" height="1.3"/><rect x="6.6" y="2.5" width="1.6" height="1.3"/><rect x="5" y="3.8" width="1.6" height="1.3"/><rect x="6.6" y="5.1" width="1.6" height="1.3"/><rect x="5" y="6.4" width="1.6" height="1.3"/></g><path d="M5.3 8.2 H7.9 L8.9 13.2 Q9 15.6 6.6 15.6 Q4.2 15.6 4.3 13.2Z" fill="#9a9a9a"/><ellipse cx="6.6" cy="13.4" rx="1.3" ry="1.1" fill="#fff"/></svg>
<div class="t" style="left:1593.64px;top:305.40px;font-size:13px;color:#222;">6</div>
<div class="t" style="left:1647.27px;top:305.40px;font-size:13px;color:#222;">16</div>
<div class="t" style="left:1705.89px;top:305.40px;font-size:13px;color:#222;">1</div>
<div class="t" style="left:1750.89px;top:305.40px;font-size:13px;color:#222;">6</div>
<div class="t" style="left:1800.89px;top:305.40px;font-size:13px;color:#222;">8</div>
<svg class="a" style="left:1843px;top:304px;" width="17" height="16" viewBox="0 0 17 16"><path d="M2.6 11.2 L11.6 2.2 L14.8 5.4 L5.8 14.4Z" fill="#9a9a9a"/><path d="M12.3 1.5 L13.6 0.2 L16.8 3.4 L15.5 4.7Z" fill="#9a9a9a"/><path d="M2.1 12 L0.6 16.4 L5 14.9Z" fill="#9a9a9a"/><path d="M2.2 13.4 L1.6 15.4 L3.6 14.8Z" fill="#fff"/><path d="M4.2 11.8 L12 4" stroke="#fff" stroke-width="0.6" stroke-dasharray="1 1"/></svg>
<svg class="a" style="left:1867px;top:303px;" width="17" height="18" viewBox="0 0 17 18"><rect x="0.8" y="2.5" width="15.4" height="15" fill="#9a9a9a"/><g fill="#fff"><rect x="1.6" y="6.4" width="2.9" height="2.7"/><rect x="5.4" y="6.4" width="2.9" height="2.7"/><rect x="9.2" y="6.4" width="2.9" height="2.7"/><rect x="13.0" y="6.4" width="2.9" height="2.7"/><rect x="1.6" y="10.0" width="2.9" height="2.7"/><rect x="5.4" y="10.0" width="2.9" height="2.7"/><rect x="9.2" y="10.0" width="2.9" height="2.7"/><rect x="13.0" y="10.0" width="2.9" height="2.7"/><rect x="1.6" y="13.6" width="2.9" height="2.7"/><rect x="5.4" y="13.6" width="2.9" height="2.7"/><rect x="9.2" y="13.6" width="2.9" height="2.7"/><rect x="13.0" y="13.6" width="2.9" height="2.7"/></g><rect x="3.3" y="0.3" width="2.4" height="4" rx="1" fill="#9a9a9a"/><rect x="11.2" y="0.3" width="2.4" height="4" rx="1" fill="#9a9a9a"/></svg>
<svg class="a" style="left:1890.5px;top:304px;" width="17" height="16" viewBox="0 0 17 16"><path d="M3.5 1 H11.5 L13.5 3 V7 H3.5Z" fill="none" stroke="#9a9a9a" stroke-width="1.5"/><rect x="0.5" y="6.5" width="16" height="6.5" rx="1" fill="#9a9a9a"/><rect x="3.5" y="10.5" width="10" height="4.5" fill="#fff" stroke="#9a9a9a" stroke-width="1.5"/></svg>
<svg class="a" style="left:281px;top:348px;" width="18" height="15" viewBox="0 0 18 15"><path d="M1.5 7.5 L6.5 12.5 L16.5 2.5" fill="none" stroke="#008000" stroke-width="3.6"/></svg>
<div class="t" style="left:332.30px;top:349.80px;font-size:13px;color:#222;letter-spacing:-0.118px;">Coastal Apartment 1</div>
<div class="t" style="left:769.00px;top:349.80px;font-size:13px;color:#222;letter-spacing:-0.118px;">Coastal Apartment 1</div>
<div class="t" style="left:1212.49px;top:349.80px;font-size:13px;color:#222;">Instant</div>
<svg class="a" style="left:1283px;top:349px;" width="16" height="16" viewBox="0 0 16 16"><circle cx="8" cy="8" r="7.9" fill="#008000"/><path d="M2.8 3.2 Q4.8 1.6 7.5 2 L8.6 3.9 L10.4 4.1 L12.1 5 L12.4 6.8 L10 7.8 L8.4 9 L7.6 10.8 Q6.8 9.8 5.8 8.2 L3.7 5.9 Z" fill="#fff"/><path d="M9.7 11.1 L12.4 12.2 L11.6 13.9 L10 13.2Z" fill="#fff"/></svg>
<svg class="a" style="left:1306px;top:348px;" width="18" height="18" viewBox="0 0 18 18"><rect x="0" y="0" width="18" height="18" rx="4.2" fill="#808080"/><path d="M9 13.8 Q6.6 11.2 7 9.6 Q7.3 8.1 9 8.1 Q10.7 8.1 11 9.6 Q11.4 11.2 9 13.8 Q6 16.8 3.6 16.6 Q1.2 16.2 1.9 13.2 L7 3.2 Q7.9 1.3 9 1.3 Q10.1 1.3 11 3.2 L16.1 13.2 Q16.8 16.2 14.4 16.6 Q12 16.8 9 13.8Z" fill="none" stroke="#fff" stroke-width="1.25" stroke-linejoin="round"/></svg>
<svg class="a" style="left:1330px;top:348px;" width="18" height="18" viewBox="0 0 18 18"><rect x="0" y="0" width="18" height="18" rx="4.2" fill="#808080"/><path d="M0.9 4.4 Q0.9 1 4.2 1 H8.2 Q11.7 1 11.7 4.6 Q11.7 6.8 10.1 7.8 Q12.4 8.8 12.4 12 Q12.4 16.6 8.2 16.6 H4.2 Q0.9 16.6 0.9 13.4Z" fill="#fff"/><rect x="3.9" y="3.9" width="4.1" height="3.2" rx="1" fill="#808080"/><rect x="3.9" y="10.1" width="4.7" height="3.2" rx="1" fill="#808080"/><circle cx="14.8" cy="14.8" r="1.75" fill="#fff"/></svg>
<svg class="a" style="left:1354px;top:348px;" width="18" height="18" viewBox="0 0 18 18"><rect x="0" y="0" width="18" height="18" rx="4.2" fill="#808080"/><path d="M6.2 1.9 H13.3 L16.8 6.6 H9.9Z" fill="#f4f4f4"/><rect x="9.7" y="6.6" width="7.1" height="9.6" fill="#f4f4f4"/><g fill="#808080"><rect x="11.2" y="8.3" width="1.8" height="2.1"/><rect x="13.3" y="8.3" width="1.7" height="2.1"/><rect x="11.2" y="10.7" width="1.8" height="2"/><rect x="13.3" y="10.7" width="1.7" height="2"/></g><path d="M1.4 16.2 V7.6 L5.9 3.1 L9.7 7 V16.2" fill="none" stroke="#f0f0f0" stroke-width="0.9"/><path d="M1.4 14.3 H9.7" stroke="#d8d8d8" stroke-width="0.8"/><circle cx="5.7" cy="9.2" r="1.5" fill="none" stroke="#c8c8c8" stroke-width="0.8"/><path d="M7.2 9.4 Q7.2 12.6 4 13.6" fill="none" stroke="#c8c8c8" stroke-width="0.8"/></svg>
<div class="t" style="left:1445.89px;top:349.80px;font-size:13px;color:#222;">1</div>
<div class="t" style="left:1515.89px;top:349.80px;font-size:13px;color:#222;">9</div>
<svg class="a" style="left:1567px;top:347px;" width="16" height="19" viewBox="0 0 16 19"><path d="M1 0.8 H10.4 L15.2 5.6 V18.2 H1Z" fill="#fff" stroke="#9a9a9a" stroke-width="1.4" stroke-linejoin="round"/><path d="M10.4 1.2 V5.6 H14.8" fill="none" stroke="#9a9a9a" stroke-width="1.1"/><g fill="#9a9a9a"><rect x="5" y="1.2" width="1.6" height="1.3"/><rect x="6.6" y="2.5" width="1.6" height="1.3"/><rect x="5" y="3.8" width="1.6" height="1.3"/><rect x="6.6" y="5.1" width="1.6" height="1.3"/><rect x="5" y="6.4" width="1.6" height="1.3"/></g><path d="M5.3 8.2 H7.9 L8.9 13.2 Q9 15.6 6.6 15.6 Q4.2 15.6 4.3 13.2Z" fill="#9a9a9a"/><ellipse cx="6.6" cy="13.4" rx="1.3" ry="1.1" fill="#fff"/></svg>
<div class="t" style="left:1590.50px;top:349.80px;font-size:13px;color:#222;">11</div>
<div class="t" style="left:1647.27px;top:349.80px;font-size:13px;color:#222;">17</div>
<div class="t" style="left:1705.89px;top:349.80px;font-size:13px;color:#222;">1</div>
<div class="t" style="left:1750.89px;top:349.80px;font-size:13px;color:#222;">2</div>
<div class="t" style="left:1800.89px;top:349.80px;font-size:13px;color:#222;">4</div>
<svg class="a" style="left:1843px;top:349px;" width="17" height="16" viewBox="0 0 17 16"><path d="M2.6 11.2 L11.6 2.2 L14.8 5.4 L5.8 14.4Z" fill="#9a9a9a"/><path d="M12.3 1.5 L13.6 0.2 L16.8 3.4 L15.5 4.7Z" fill="#9a9a9a"/><path d="M2.1 12 L0.6 16.4 L5 14.9Z" fill="#9a9a9a"/><path d="M2.2 13.4 L1.6 15.4 L3.6 14.8Z" fill="#fff"/><path d="M4.2 11.8 L12 4" stroke="#fff" stroke-width="0.6" stroke-dasharray="1 1"/></svg>
<svg class="a" style="left:1867px;top:348px;" width="17" height="18" viewBox="0 0 17 18"><rect x="0.8" y="2.5" width="15.4" height="15" fill="#9a9a9a"/><g fill="#fff"><rect x="1.6" y="6.4" width="2.9" height="2.7"/><rect x="5.4" y="6.4" width="2.9" height="2.7"/><rect x="9.2" y="6.4" width="2.9" height="2.7"/><rect x="13.0" y="6.4" width="2.9" height="2.7"/><rect x="1.6" y="10.0" width="2.9" height="2.7"/><rect x="5.4" y="10.0" width="2.9" height="2.7"/><rect x="9.2" y="10.0" width="2.9" height="2.7"/><rect x="13.0" y="10.0" width="2.9" height="2.7"/><rect x="1.6" y="13.6" width="2.9" height="2.7"/><rect x="5.4" y="13.6" width="2.9" height="2.7"/><rect x="9.2" y="13.6" width="2.9" height="2.7"/><rect x="13.0" y="13.6" width="2.9" height="2.7"/></g><rect x="3.3" y="0.3" width="2.4" height="4" rx="1" fill="#9a9a9a"/><rect x="11.2" y="0.3" width="2.4" height="4" rx="1" fill="#9a9a9a"/></svg>
<svg class="a" style="left:1890.5px;top:349px;" width="17" height="16" viewBox="0 0 17 16"><path d="M3.5 1 H11.5 L13.5 3 V7 H3.5Z" fill="none" stroke="#9a9a9a" stroke-width="1.5"/><rect x="0.5" y="6.5" width="16" height="6.5" rx="1" fill="#9a9a9a"/><rect x="3.5" y="10.5" width="10" height="4.5" fill="#fff" stroke="#9a9a9a" stroke-width="1.5"/></svg>
<svg class="a" style="left:281px;top:392px;" width="18" height="15" viewBox="0 0 18 15"><path d="M1.5 7.5 L6.5 12.5 L16.5 2.5" fill="none" stroke="#008000" stroke-width="3.6"/></svg>
<div class="t" style="left:332.30px;top:394.20px;font-size:13px;color:#222;letter-spacing:-0.118px;">Coastal Apartment 2</div>
<div class="t" style="left:769.00px;top:394.20px;font-size:13px;color:#222;letter-spacing:-0.118px;">Coastal Apartment 2</div>
<div class="t" style="left:1212.49px;top:394.20px;font-size:13px;color:#222;">Instant</div>
<svg class="a" style="left:1283px;top:393px;" width="16" height="16" viewBox="0 0 16 16"><circle cx="8" cy="8" r="7.9" fill="#008000"/><path d="M2.8 3.2 Q4.8 1.6 7.5 2 L8.6 3.9 L10.4 4.1 L12.1 5 L12.4 6.8 L10 7.8 L8.4 9 L7.6 10.8 Q6.8 9.8 5.8 8.2 L3.7 5.9 Z" fill="#fff"/><path d="M9.7 11.1 L12.4 12.2 L11.6 13.9 L10 13.2Z" fill="#fff"/></svg>
<svg class="a" style="left:1306px;top:392px;" width="18" height="18" viewBox="0 0 18 18"><rect x="0" y="0" width="18" height="18" rx="4.2" fill="#808080"/><path d="M9 13.8 Q6.6 11.2 7 9.6 Q7.3 8.1 9 8.1 Q10.7 8.1 11 9.6 Q11.4 11.2 9 13.8 Q6 16.8 3.6 16.6 Q1.2 16.2 1.9 13.2 L7 3.2 Q7.9 1.3 9 1.3 Q10.1 1.3 11 3.2 L16.1 13.2 Q16.8 16.2 14.4 16.6 Q12 16.8 9 13.8Z" fill="none" stroke="#fff" stroke-width="1.25" stroke-linejoin="round"/></svg>
<svg class="a" style="left:1330px;top:392px;" width="18" height="18" viewBox="0 0 18 18"><rect x="0" y="0" width="18" height="18" rx="4.2" fill="#808080"/><path d="M0.9 4.4 Q0.9 1 4.2 1 H8.2 Q11.7 1 11.7 4.6 Q11.7 6.8 10.1 7.8 Q12.4 8.8 12.4 12 Q12.4 16.6 8.2 16.6 H4.2 Q0.9 16.6 0.9 13.4Z" fill="#fff"/><rect x="3.9" y="3.9" width="4.1" height="3.2" rx="1" fill="#808080"/><rect x="3.9" y="10.1" width="4.7" height="3.2" rx="1" fill="#808080"/><circle cx="14.8" cy="14.8" r="1.75" fill="#fff"/></svg>
<svg class="a" style="left:1354px;top:392px;" width="18" height="18" viewBox="0 0 18 18"><rect x="0" y="0" width="18" height="18" rx="4.2" fill="#808080"/><path d="M6.2 1.9 H13.3 L16.8 6.6 H9.9Z" fill="#f4f4f4"/><rect x="9.7" y="6.6" width="7.1" height="9.6" fill="#f4f4f4"/><g fill="#808080"><rect x="11.2" y="8.3" width="1.8" height="2.1"/><rect x="13.3" y="8.3" width="1.7" height="2.1"/><rect x="11.2" y="10.7" width="1.8" height="2"/><rect x="13.3" y="10.7" width="1.7" height="2"/></g><path d="M1.4 16.2 V7.6 L5.9 3.1 L9.7 7 V16.2" fill="none" stroke="#f0f0f0" stroke-width="0.9"/><path d="M1.4 14.3 H9.7" stroke="#d8d8d8" stroke-width="0.8"/><circle cx="5.7" cy="9.2" r="1.5" fill="none" stroke="#c8c8c8" stroke-width="0.8"/><path d="M7.2 9.4 Q7.2 12.6 4 13.6" fill="none" stroke="#c8c8c8" stroke-width="0.8"/></svg>
<div class="t" style="left:1445.89px;top:394.20px;font-size:13px;color:#222;">3</div>
<div class="t" style="left:1512.27px;top:394.20px;font-size:13px;color:#222;">18</div>
<svg class="a" style="left:1570px;top:392px;" width="16" height="19" viewBox="0 0 16 19"><path d="M1 0.8 H10.4 L15.2 5.6 V18.2 H1Z" fill="#fff" stroke="#9a9a9a" stroke-width="1.4" stroke-linejoin="round"/><path d="M10.4 1.2 V5.6 H14.8" fill="none" stroke="#9a9a9a" stroke-width="1.1"/><g fill="#9a9a9a"><rect x="5" y="1.2" width="1.6" height="1.3"/><rect x="6.6" y="2.5" width="1.6" height="1.3"/><rect x="5" y="3.8" width="1.6" height="1.3"/><rect x="6.6" y="5.1" width="1.6" height="1.3"/><rect x="5" y="6.4" width="1.6" height="1.3"/></g><path d="M5.3 8.2 H7.9 L8.9 13.2 Q9 15.6 6.6 15.6 Q4.2 15.6 4.3 13.2Z" fill="#9a9a9a"/><ellipse cx="6.6" cy="13.4" rx="1.3" ry="1.1" fill="#fff"/></svg>
<div class="t" style="left:1593.64px;top:394.20px;font-size:13px;color:#222;">8</div>
<div class="t" style="left:1647.27px;top:394.20px;font-size:13px;color:#222;">17</div>
<div class="t" style="left:1705.89px;top:394.20px;font-size:13px;color:#222;">2</div>
<div class="t" style="left:1750.89px;top:394.20px;font-size:13px;color:#222;">2</div>
<div class="t" style="left:1800.89px;top:394.20px;font-size:13px;color:#222;">4</div>
<svg class="a" style="left:1843px;top:393px;" width="17" height="16" viewBox="0 0 17 16"><path d="M2.6 11.2 L11.6 2.2 L14.8 5.4 L5.8 14.4Z" fill="#9a9a9a"/><path d="M12.3 1.5 L13.6 0.2 L16.8 3.4 L15.5 4.7Z" fill="#9a9a9a"/><path d="M2.1 12 L0.6 16.4 L5 14.9Z" fill="#9a9a9a"/><path d="M2.2 13.4 L1.6 15.4 L3.6 14.8Z" fill="#fff"/><path d="M4.2 11.8 L12 4" stroke="#fff" stroke-width="0.6" stroke-dasharray="1 1"/></svg>
<svg class="a" style="left:1867px;top:392px;" width="17" height="18" viewBox="0 0 17 18"><rect x="0.8" y="2.5" width="15.4" height="15" fill="#9a9a9a"/><g fill="#fff"><rect x="1.6" y="6.4" width="2.9" height="2.7"/><rect x="5.4" y="6.4" width="2.9" height="2.7"/><rect x="9.2" y="6.4" width="2.9" height="2.7"/><rect x="13.0" y="6.4" width="2.9" height="2.7"/><rect x="1.6" y="10.0" width="2.9" height="2.7"/><rect x="5.4" y="10.0" width="2.9" height="2.7"/><rect x="9.2" y="10.0" width="2.9" height="2.7"/><rect x="13.0" y="10.0" width="2.9" height="2.7"/><rect x="1.6" y="13.6" width="2.9" height="2.7"/><rect x="5.4" y="13.6" width="2.9" height="2.7"/><rect x="9.2" y="13.6" width="2.9" height="2.7"/><rect x="13.0" y="13.6" width="2.9" height="2.7"/></g><rect x="3.3" y="0.3" width="2.4" height="4" rx="1" fill="#9a9a9a"/><rect x="11.2" y="0.3" width="2.4" height="4" rx="1" fill="#9a9a9a"/></svg>
<svg class="a" style="left:1890.5px;top:393px;" width="17" height="16" viewBox="0 0 17 16"><path d="M3.5 1 H11.5 L13.5 3 V7 H3.5Z" fill="none" stroke="#9a9a9a" stroke-width="1.5"/><rect x="0.5" y="6.5" width="16" height="6.5" rx="1" fill="#9a9a9a"/><rect x="3.5" y="10.5" width="10" height="4.5" fill="#fff" stroke="#9a9a9a" stroke-width="1.5"/></svg>
<svg class="a" style="left:281px;top:437px;" width="18" height="15" viewBox="0 0 18 15"><path d="M1.5 7.5 L6.5 12.5 L16.5 2.5" fill="none" stroke="#008000" stroke-width="3.6"/></svg>
<div class="t" style="left:332.30px;top:438.60px;font-size:13px;color:#222;letter-spacing:-0.118px;">Coastal Apartment 3</div>
<div class="t" style="left:769.00px;top:438.60px;font-size:13px;color:#222;letter-spacing:-0.118px;">Coastal Apartment 3</div>
<div class="t" style="left:1212.49px;top:438.60px;font-size:13px;color:#222;">Instant</div>
<svg class="a" style="left:1283px;top:438px;" width="16" height="16" viewBox="0 0 16 16"><circle cx="8" cy="8" r="7.9" fill="#008000"/><path d="M2.8 3.2 Q4.8 1.6 7.5 2 L8.6 3.9 L10.4 4.1 L12.1 5 L12.4 6.8 L10 7.8 L8.4 9 L7.6 10.8 Q6.8 9.8 5.8 8.2 L3.7 5.9 Z" fill="#fff"/><path d="M9.7 11.1 L12.4 12.2 L11.6 13.9 L10 13.2Z" fill="#fff"/></svg>
<svg class="a" style="left:1306px;top:437px;" width="18" height="18" viewBox="0 0 18 18"><rect x="0" y="0" width="18" height="18" rx="4.2" fill="#808080"/><path d="M9 13.8 Q6.6 11.2 7 9.6 Q7.3 8.1 9 8.1 Q10.7 8.1 11 9.6 Q11.4 11.2 9 13.8 Q6 16.8 3.6 16.6 Q1.2 16.2 1.9 13.2 L7 3.2 Q7.9 1.3 9 1.3 Q10.1 1.3 11 3.2 L16.1 13.2 Q16.8 16.2 14.4 16.6 Q12 16.8 9 13.8Z" fill="none" stroke="#fff" stroke-width="1.25" stroke-linejoin="round"/></svg>
<svg class="a" style="left:1330px;top:437px;" width="18" height="18" viewBox="0 0 18 18"><rect x="0" y="0" width="18" height="18" rx="4.2" fill="#808080"/><path d="M0.9 4.4 Q0.9 1 4.2 1 H8.2 Q11.7 1 11.7 4.6 Q11.7 6.8 10.1 7.8 Q12.4 8.8 12.4 12 Q12.4 16.6 8.2 16.6 H4.2 Q0.9 16.6 0.9 13.4Z" fill="#fff"/><rect x="3.9" y="3.9" width="4.1" height="3.2" rx="1" fill="#808080"/><rect x="3.9" y="10.1" width="4.7" height="3.2" rx="1" fill="#808080"/><circle cx="14.8" cy="14.8" r="1.75" fill="#fff"/></svg>
<svg class="a" style="left:1354px;top:437px;" width="18" height="18" viewBox="0 0 18 18"><rect x="0" y="0" width="18" height="18" rx="4.2" fill="#808080"/><path d="M6.2 1.9 H13.3 L16.8 6.6 H9.9Z" fill="#f4f4f4"/><rect x="9.7" y="6.6" width="7.1" height="9.6" fill="#f4f4f4"/><g fill="#808080"><rect x="11.2" y="8.3" width="1.8" height="2.1"/><rect x="13.3" y="8.3" width="1.7" height="2.1"/><rect x="11.2" y="10.7" width="1.8" height="2"/><rect x="13.3" y="10.7" width="1.7" height="2"/></g><path d="M1.4 16.2 V7.6 L5.9 3.1 L9.7 7 V16.2" fill="none" stroke="#f0f0f0" stroke-width="0.9"/><path d="M1.4 14.3 H9.7" stroke="#d8d8d8" stroke-width="0.8"/><circle cx="5.7" cy="9.2" r="1.5" fill="none" stroke="#c8c8c8" stroke-width="0.8"/><path d="M7.2 9.4 Q7.2 12.6 4 13.6" fill="none" stroke="#c8c8c8" stroke-width="0.8"/></svg>
<div class="t" style="left:1445.89px;top:438.60px;font-size:13px;color:#222;">2</div>
<div class="t" style="left:1512.27px;top:438.60px;font-size:13px;color:#222;">20</div>
<svg class="a" style="left:1570px;top:436px;" width="16" height="19" viewBox="0 0 16 19"><path d="M1 0.8 H10.4 L15.2 5.6 V18.2 H1Z" fill="#fff" stroke="#9a9a9a" stroke-width="1.4" stroke-linejoin="round"/><path d="M10.4 1.2 V5.6 H14.8" fill="none" stroke="#9a9a9a" stroke-width="1.1"/><g fill="#9a9a9a"><rect x="5" y="1.2" width="1.6" height="1.3"/><rect x="6.6" y="2.5" width="1.6" height="1.3"/><rect x="5" y="3.8" width="1.6" height="1.3"/><rect x="6.6" y="5.1" width="1.6" height="1.3"/><rect x="5" y="6.4" width="1.6" height="1.3"/></g><path d="M5.3 8.2 H7.9 L8.9 13.2 Q9 15.6 6.6 15.6 Q4.2 15.6 4.3 13.2Z" fill="#9a9a9a"/><ellipse cx="6.6" cy="13.4" rx="1.3" ry="1.1" fill="#fff"/></svg>
<div class="t" style="left:1593.64px;top:438.60px;font-size:13px;color:#222;">8</div>
<div class="t" style="left:1647.27px;top:438.60px;font-size:13px;color:#222;">17</div>
<div class="t" style="left:1705.89px;top:438.60px;font-size:13px;color:#222;">2</div>
<div class="t" style="left:1750.89px;top:438.60px;font-size:13px;color:#222;">6</div>
<div class="t" style="left:1797.27px;top:438.60px;font-size:13px;color:#222;">10</div>
<svg class="a" style="left:1843px;top:437px;" width="17" height="16" viewBox="0 0 17 16"><path d="M2.6 11.2 L11.6 2.2 L14.8 5.4 L5.8 14.4Z" fill="#9a9a9a"/><path d="M12.3 1.5 L13.6 0.2 L16.8 3.4 L15.5 4.7Z" fill="#9a9a9a"/><path d="M2.1 12 L0.6 16.4 L5 14.9Z" fill="#9a9a9a"/><path d="M2.2 13.4 L1.6 15.4 L3.6 14.8Z" fill="#fff"/><path d="M4.2 11.8 L12 4" stroke="#fff" stroke-width="0.6" stroke-dasharray="1 1"/></svg>
<svg class="a" style="left:1867px;top:436px;" width="17" height="18" viewBox="0 0 17 18"><rect x="0.8" y="2.5" width="15.4" height="15" fill="#9a9a9a"/><g fill="#fff"><rect x="1.6" y="6.4" width="2.9" height="2.7"/><rect x="5.4" y="6.4" width="2.9" height="2.7"/><rect x="9.2" y="6.4" width="2.9" height="2.7"/><rect x="13.0" y="6.4" width="2.9" height="2.7"/><rect x="1.6" y="10.0" width="2.9" height="2.7"/><rect x="5.4" y="10.0" width="2.9" height="2.7"/><rect x="9.2" y="10.0" width="2.9" height="2.7"/><rect x="13.0" y="10.0" width="2.9" height="2.7"/><rect x="1.6" y="13.6" width="2.9" height="2.7"/><rect x="5.4" y="13.6" width="2.9" height="2.7"/><rect x="9.2" y="13.6" width="2.9" height="2.7"/><rect x="13.0" y="13.6" width="2.9" height="2.7"/></g><rect x="3.3" y="0.3" width="2.4" height="4" rx="1" fill="#9a9a9a"/><rect x="11.2" y="0.3" width="2.4" height="4" rx="1" fill="#9a9a9a"/></svg>
<svg class="a" style="left:1890.5px;top:437px;" width="17" height="16" viewBox="0 0 17 16"><path d="M3.5 1 H11.5 L13.5 3 V7 H3.5Z" fill="none" stroke="#9a9a9a" stroke-width="1.5"/><rect x="0.5" y="6.5" width="16" height="6.5" rx="1" fill="#9a9a9a"/><rect x="3.5" y="10.5" width="10" height="4.5" fill="#fff" stroke="#9a9a9a" stroke-width="1.5"/></svg>
<svg class="a" style="left:281px;top:481px;" width="18" height="15" viewBox="0 0 18 15"><path d="M1.5 7.5 L6.5 12.5 L16.5 2.5" fill="none" stroke="#008000" stroke-width="3.6"/></svg>
<div class="t" style="left:332.30px;top:483.00px;font-size:13px;color:#222;letter-spacing:-0.126px;">Gracious Gardens Getaway</div>
<div class="t" style="left:769.00px;top:483.00px;font-size:13px;color:#222;letter-spacing:-0.126px;">Gracious Gardens Getaway</div>
<div class="t" style="left:1212.49px;top:483.00px;font-size:13px;color:#222;">Instant</div>
<svg class="a" style="left:1283px;top:482px;" width="16" height="16" viewBox="0 0 16 16"><circle cx="8" cy="8" r="7.9" fill="#008000"/><path d="M2.8 3.2 Q4.8 1.6 7.5 2 L8.6 3.9 L10.4 4.1 L12.1 5 L12.4 6.8 L10 7.8 L8.4 9 L7.6 10.8 Q6.8 9.8 5.8 8.2 L3.7 5.9 Z" fill="#fff"/><path d="M9.7 11.1 L12.4 12.2 L11.6 13.9 L10 13.2Z" fill="#fff"/></svg>
<svg class="a" style="left:1306px;top:481px;" width="18" height="18" viewBox="0 0 18 18"><rect x="0" y="0" width="18" height="18" rx="4.2" fill="#808080"/><path d="M9 13.8 Q6.6 11.2 7 9.6 Q7.3 8.1 9 8.1 Q10.7 8.1 11 9.6 Q11.4 11.2 9 13.8 Q6 16.8 3.6 16.6 Q1.2 16.2 1.9 13.2 L7 3.2 Q7.9 1.3 9 1.3 Q10.1 1.3 11 3.2 L16.1 13.2 Q16.8 16.2 14.4 16.6 Q12 16.8 9 13.8Z" fill="none" stroke="#fff" stroke-width="1.25" stroke-linejoin="round"/></svg>
<svg class="a" style="left:1330px;top:481px;" width="18" height="18" viewBox="0 0 18 18"><rect x="0" y="0" width="18" height="18" rx="4.2" fill="#808080"/><path d="M0.9 4.4 Q0.9 1 4.2 1 H8.2 Q11.7 1 11.7 4.6 Q11.7 6.8 10.1 7.8 Q12.4 8.8 12.4 12 Q12.4 16.6 8.2 16.6 H4.2 Q0.9 16.6 0.9 13.4Z" fill="#fff"/><rect x="3.9" y="3.9" width="4.1" height="3.2" rx="1" fill="#808080"/><rect x="3.9" y="10.1" width="4.7" height="3.2" rx="1" fill="#808080"/><circle cx="14.8" cy="14.8" r="1.75" fill="#fff"/></svg>
<svg class="a" style="left:1354px;top:481px;" width="18" height="18" viewBox="0 0 18 18"><rect x="0" y="0" width="18" height="18" rx="4.2" fill="#808080"/><path d="M6.2 1.9 H13.3 L16.8 6.6 H9.9Z" fill="#f4f4f4"/><rect x="9.7" y="6.6" width="7.1" height="9.6" fill="#f4f4f4"/><g fill="#808080"><rect x="11.2" y="8.3" width="1.8" height="2.1"/><rect x="13.3" y="8.3" width="1.7" height="2.1"/><rect x="11.2" y="10.7" width="1.8" height="2"/><rect x="13.3" y="10.7" width="1.7" height="2"/></g><path d="M1.4 16.2 V7.6 L5.9 3.1 L9.7 7 V16.2" fill="none" stroke="#f0f0f0" stroke-width="0.9"/><path d="M1.4 14.3 H9.7" stroke="#d8d8d8" stroke-width="0.8"/><circle cx="5.7" cy="9.2" r="1.5" fill="none" stroke="#c8c8c8" stroke-width="0.8"/><path d="M7.2 9.4 Q7.2 12.6 4 13.6" fill="none" stroke="#c8c8c8" stroke-width="0.8"/></svg>
<div class="t" style="left:1445.89px;top:483.00px;font-size:13px;color:#222;">2</div>
<div class="t" style="left:1512.27px;top:483.00px;font-size:13px;color:#222;">25</div>
<svg class="a" style="left:1570px;top:480px;" width="16" height="19" viewBox="0 0 16 19"><path d="M1 0.8 H10.4 L15.2 5.6 V18.2 H1Z" fill="#fff" stroke="#9a9a9a" stroke-width="1.4" stroke-linejoin="round"/><path d="M10.4 1.2 V5.6 H14.8" fill="none" stroke="#9a9a9a" stroke-width="1.1"/><g fill="#9a9a9a"><rect x="5" y="1.2" width="1.6" height="1.3"/><rect x="6.6" y="2.5" width="1.6" height="1.3"/><rect x="5" y="3.8" width="1.6" height="1.3"/><rect x="6.6" y="5.1" width="1.6" height="1.3"/><rect x="5" y="6.4" width="1.6" height="1.3"/></g><path d="M5.3 8.2 H7.9 L8.9 13.2 Q9 15.6 6.6 15.6 Q4.2 15.6 4.3 13.2Z" fill="#9a9a9a"/><ellipse cx="6.6" cy="13.4" rx="1.3" ry="1.1" fill="#fff"/></svg>
<div class="t" style="left:1593.64px;top:483.00px;font-size:13px;color:#222;">0</div>
<div class="t" style="left:1647.27px;top:483.00px;font-size:13px;color:#222;">16</div>
<div class="t" style="left:1705.89px;top:483.00px;font-size:13px;color:#222;">1</div>
<div class="t" style="left:1750.89px;top:483.00px;font-size:13px;color:#222;">5</div>
<div class="t" style="left:1800.89px;top:483.00px;font-size:13px;color:#222;">5</div>
<svg class="a" style="left:1843px;top:482px;" width="17" height="16" viewBox="0 0 17 16"><path d="M2.6 11.2 L11.6 2.2 L14.8 5.4 L5.8 14.4Z" fill="#9a9a9a"/><path d="M12.3 1.5 L13.6 0.2 L16.8 3.4 L15.5 4.7Z" fill="#9a9a9a"/><path d="M2.1 12 L0.6 16.4 L5 14.9Z" fill="#9a9a9a"/><path d="M2.2 13.4 L1.6 15.4 L3.6 14.8Z" fill="#fff"/><path d="M4.2 11.8 L12 4" stroke="#fff" stroke-width="0.6" stroke-dasharray="1 1"/></svg>
<svg class="a" style="left:1867px;top:481px;" width="17" height="18" viewBox="0 0 17 18"><rect x="0.8" y="2.5" width="15.4" height="15" fill="#9a9a9a"/><g fill="#fff"><rect x="1.6" y="6.4" width="2.9" height="2.7"/><rect x="5.4" y="6.4" width="2.9" height="2.7"/><rect x="9.2" y="6.4" width="2.9" height="2.7"/><rect x="13.0" y="6.4" width="2.9" height="2.7"/><rect x="1.6" y="10.0" width="2.9" height="2.7"/><rect x="5.4" y="10.0" width="2.9" height="2.7"/><rect x="9.2" y="10.0" width="2.9" height="2.7"/><rect x="13.0" y="10.0" width="2.9" height="2.7"/><rect x="1.6" y="13.6" width="2.9" height="2.7"/><rect x="5.4" y="13.6" width="2.9" height="2.7"/><rect x="9.2" y="13.6" width="2.9" height="2.7"/><rect x="13.0" y="13.6" width="2.9" height="2.7"/></g><rect x="3.3" y="0.3" width="2.4" height="4" rx="1" fill="#9a9a9a"/><rect x="11.2" y="0.3" width="2.4" height="4" rx="1" fill="#9a9a9a"/></svg>
<svg class="a" style="left:1890.5px;top:482px;" width="17" height="16" viewBox="0 0 17 16"><path d="M3.5 1 H11.5 L13.5 3 V7 H3.5Z" fill="none" stroke="#9a9a9a" stroke-width="1.5"/><rect x="0.5" y="6.5" width="16" height="6.5" rx="1" fill="#9a9a9a"/><rect x="3.5" y="10.5" width="10" height="4.5" fill="#fff" stroke="#9a9a9a" stroke-width="1.5"/></svg>
<svg class="a" style="left:281px;top:526px;" width="18" height="15" viewBox="0 0 18 15"><path d="M1.5 7.5 L6.5 12.5 L16.5 2.5" fill="none" stroke="#008000" stroke-width="3.6"/></svg>
<div class="t" style="left:332.30px;top:527.40px;font-size:13px;color:#222;letter-spacing:-0.130px;">Jungle House</div>
<div class="t" style="left:769.00px;top:527.40px;font-size:13px;color:#222;letter-spacing:-0.124px;">Jungle House Area</div>
<div class="t" style="left:1212.49px;top:527.40px;font-size:13px;color:#222;">Instant</div>
<svg class="a" style="left:1283px;top:526px;" width="16" height="16" viewBox="0 0 16 16"><circle cx="8" cy="8" r="7.9" fill="#008000"/><path d="M2.8 3.2 Q4.8 1.6 7.5 2 L8.6 3.9 L10.4 4.1 L12.1 5 L12.4 6.8 L10 7.8 L8.4 9 L7.6 10.8 Q6.8 9.8 5.8 8.2 L3.7 5.9 Z" fill="#fff"/><path d="M9.7 11.1 L12.4 12.2 L11.6 13.9 L10 13.2Z" fill="#fff"/></svg>
<svg class="a" style="left:1306px;top:526px;" width="18" height="18" viewBox="0 0 18 18"><rect x="0" y="0" width="18" height="18" rx="4.2" fill="#808080"/><path d="M9 13.8 Q6.6 11.2 7 9.6 Q7.3 8.1 9 8.1 Q10.7 8.1 11 9.6 Q11.4 11.2 9 13.8 Q6 16.8 3.6 16.6 Q1.2 16.2 1.9 13.2 L7 3.2 Q7.9 1.3 9 1.3 Q10.1 1.3 11 3.2 L16.1 13.2 Q16.8 16.2 14.4 16.6 Q12 16.8 9 13.8Z" fill="none" stroke="#fff" stroke-width="1.25" stroke-linejoin="round"/></svg>
<svg class="a" style="left:1330px;top:526px;" width="18" height="18" viewBox="0 0 18 18"><rect x="0" y="0" width="18" height="18" rx="4.2" fill="#808080"/><path d="M0.9 4.4 Q0.9 1 4.2 1 H8.2 Q11.7 1 11.7 4.6 Q11.7 6.8 10.1 7.8 Q12.4 8.8 12.4 12 Q12.4 16.6 8.2 16.6 H4.2 Q0.9 16.6 0.9 13.4Z" fill="#fff"/><rect x="3.9" y="3.9" width="4.1" height="3.2" rx="1" fill="#808080"/><rect x="3.9" y="10.1" width="4.7" height="3.2" rx="1" fill="#808080"/><circle cx="14.8" cy="14.8" r="1.75" fill="#fff"/></svg>
<svg class="a" style="left:1354px;top:526px;" width="18" height="18" viewBox="0 0 18 18"><rect x="0" y="0" width="18" height="18" rx="4.2" fill="#808080"/><path d="M6.2 1.9 H13.3 L16.8 6.6 H9.9Z" fill="#f4f4f4"/><rect x="9.7" y="6.6" width="7.1" height="9.6" fill="#f4f4f4"/><g fill="#808080"><rect x="11.2" y="8.3" width="1.8" height="2.1"/><rect x="13.3" y="8.3" width="1.7" height="2.1"/><rect x="11.2" y="10.7" width="1.8" height="2"/><rect x="13.3" y="10.7" width="1.7" height="2"/></g><path d="M1.4 16.2 V7.6 L5.9 3.1 L9.7 7 V16.2" fill="none" stroke="#f0f0f0" stroke-width="0.9"/><path d="M1.4 14.3 H9.7" stroke="#d8d8d8" stroke-width="0.8"/><circle cx="5.7" cy="9.2" r="1.5" fill="none" stroke="#c8c8c8" stroke-width="0.8"/><path d="M7.2 9.4 Q7.2 12.6 4 13.6" fill="none" stroke="#c8c8c8" stroke-width="0.8"/></svg>
<div class="t" style="left:1445.89px;top:527.40px;font-size:13px;color:#222;">1</div>
<div class="t" style="left:1515.89px;top:527.40px;font-size:13px;color:#222;">4</div>
<svg class="a" style="left:1570px;top:525px;" width="16" height="19" viewBox="0 0 16 19"><path d="M1 0.8 H10.4 L15.2 5.6 V18.2 H1Z" fill="#fff" stroke="#9a9a9a" stroke-width="1.4" stroke-linejoin="round"/><path d="M10.4 1.2 V5.6 H14.8" fill="none" stroke="#9a9a9a" stroke-width="1.1"/><g fill="#9a9a9a"><rect x="5" y="1.2" width="1.6" height="1.3"/><rect x="6.6" y="2.5" width="1.6" height="1.3"/><rect x="5" y="3.8" width="1.6" height="1.3"/><rect x="6.6" y="5.1" width="1.6" height="1.3"/><rect x="5" y="6.4" width="1.6" height="1.3"/></g><path d="M5.3 8.2 H7.9 L8.9 13.2 Q9 15.6 6.6 15.6 Q4.2 15.6 4.3 13.2Z" fill="#9a9a9a"/><ellipse cx="6.6" cy="13.4" rx="1.3" ry="1.1" fill="#fff"/></svg>
<div class="t" style="left:1593.64px;top:527.40px;font-size:13px;color:#222;">0</div>
<div class="t" style="left:1647.27px;top:527.40px;font-size:13px;color:#222;">17</div>
<div class="t" style="left:1705.89px;top:527.40px;font-size:13px;color:#222;">4</div>
<div class="t" style="left:1750.89px;top:527.40px;font-size:13px;color:#222;">8</div>
<div class="t" style="left:1800.89px;top:527.40px;font-size:13px;color:#222;">8</div>
<svg class="a" style="left:1843px;top:526px;" width="17" height="16" viewBox="0 0 17 16"><path d="M2.6 11.2 L11.6 2.2 L14.8 5.4 L5.8 14.4Z" fill="#9a9a9a"/><path d="M12.3 1.5 L13.6 0.2 L16.8 3.4 L15.5 4.7Z" fill="#9a9a9a"/><path d="M2.1 12 L0.6 16.4 L5 14.9Z" fill="#9a9a9a"/><path d="M2.2 13.4 L1.6 15.4 L3.6 14.8Z" fill="#fff"/><path d="M4.2 11.8 L12 4" stroke="#fff" stroke-width="0.6" stroke-dasharray="1 1"/></svg>
<svg class="a" style="left:1867px;top:525px;" width="17" height="18" viewBox="0 0 17 18"><rect x="0.8" y="2.5" width="15.4" height="15" fill="#9a9a9a"/><g fill="#fff"><rect x="1.6" y="6.4" width="2.9" height="2.7"/><rect x="5.4" y="6.4" width="2.9" height="2.7"/><rect x="9.2" y="6.4" width="2.9" height="2.7"/><rect x="13.0" y="6.4" width="2.9" height="2.7"/><rect x="1.6" y="10.0" width="2.9" height="2.7"/><rect x="5.4" y="10.0" width="2.9" height="2.7"/><rect x="9.2" y="10.0" width="2.9" height="2.7"/><rect x="13.0" y="10.0" width="2.9" height="2.7"/><rect x="1.6" y="13.6" width="2.9" height="2.7"/><rect x="5.4" y="13.6" width="2.9" height="2.7"/><rect x="9.2" y="13.6" width="2.9" height="2.7"/><rect x="13.0" y="13.6" width="2.9" height="2.7"/></g><rect x="3.3" y="0.3" width="2.4" height="4" rx="1" fill="#9a9a9a"/><rect x="11.2" y="0.3" width="2.4" height="4" rx="1" fill="#9a9a9a"/></svg>
<svg class="a" style="left:1890.5px;top:526px;" width="17" height="16" viewBox="0 0 17 16"><path d="M3.5 1 H11.5 L13.5 3 V7 H3.5Z" fill="none" stroke="#9a9a9a" stroke-width="1.5"/><rect x="0.5" y="6.5" width="16" height="6.5" rx="1" fill="#9a9a9a"/><rect x="3.5" y="10.5" width="10" height="4.5" fill="#fff" stroke="#9a9a9a" stroke-width="1.5"/></svg>
<svg class="a" style="left:281px;top:570px;" width="18" height="15" viewBox="0 0 18 15"><path d="M1.5 7.5 L6.5 12.5 L16.5 2.5" fill="none" stroke="#008000" stroke-width="3.6"/></svg>
<div class="t" style="left:332.30px;top:571.80px;font-size:13px;color:#222;letter-spacing:-0.111px;">Little Jungle House</div>
<div class="t" style="left:769.00px;top:571.80px;font-size:13px;color:#222;letter-spacing:-0.111px;">Little Jungle House</div>
<div class="t" style="left:1212.49px;top:571.80px;font-size:13px;color:#222;">Instant</div>
<svg class="a" style="left:1283px;top:571px;" width="16" height="16" viewBox="0 0 16 16"><circle cx="8" cy="8" r="7.9" fill="#008000"/><path d="M2.8 3.2 Q4.8 1.6 7.5 2 L8.6 3.9 L10.4 4.1 L12.1 5 L12.4 6.8 L10 7.8 L8.4 9 L7.6 10.8 Q6.8 9.8 5.8 8.2 L3.7 5.9 Z" fill="#fff"/><path d="M9.7 11.1 L12.4 12.2 L11.6 13.9 L10 13.2Z" fill="#fff"/></svg>
<svg class="a" style="left:1306px;top:570px;" width="18" height="18" viewBox="0 0 18 18"><rect x="0" y="0" width="18" height="18" rx="4.2" fill="#808080"/><path d="M9 13.8 Q6.6 11.2 7 9.6 Q7.3 8.1 9 8.1 Q10.7 8.1 11 9.6 Q11.4 11.2 9 13.8 Q6 16.8 3.6 16.6 Q1.2 16.2 1.9 13.2 L7 3.2 Q7.9 1.3 9 1.3 Q10.1 1.3 11 3.2 L16.1 13.2 Q16.8 16.2 14.4 16.6 Q12 16.8 9 13.8Z" fill="none" stroke="#fff" stroke-width="1.25" stroke-linejoin="round"/></svg>
<svg class="a" style="left:1330px;top:570px;" width="18" height="18" viewBox="0 0 18 18"><rect x="0" y="0" width="18" height="18" rx="4.2" fill="#808080"/><path d="M0.9 4.4 Q0.9 1 4.2 1 H8.2 Q11.7 1 11.7 4.6 Q11.7 6.8 10.1 7.8 Q12.4 8.8 12.4 12 Q12.4 16.6 8.2 16.6 H4.2 Q0.9 16.6 0.9 13.4Z" fill="#fff"/><rect x="3.9" y="3.9" width="4.1" height="3.2" rx="1" fill="#808080"/><rect x="3.9" y="10.1" width="4.7" height="3.2" rx="1" fill="#808080"/><circle cx="14.8" cy="14.8" r="1.75" fill="#fff"/></svg>
<svg class="a" style="left:1354px;top:570px;" width="18" height="18" viewBox="0 0 18 18"><rect x="0" y="0" width="18" height="18" rx="4.2" fill="#808080"/><path d="M6.2 1.9 H13.3 L16.8 6.6 H9.9Z" fill="#f4f4f4"/><rect x="9.7" y="6.6" width="7.1" height="9.6" fill="#f4f4f4"/><g fill="#808080"><rect x="11.2" y="8.3" width="1.8" height="2.1"/><rect x="13.3" y="8.3" width="1.7" height="2.1"/><rect x="11.2" y="10.7" width="1.8" height="2"/><rect x="13.3" y="10.7" width="1.7" height="2"/></g><path d="M1.4 16.2 V7.6 L5.9 3.1 L9.7 7 V16.2" fill="none" stroke="#f0f0f0" stroke-width="0.9"/><path d="M1.4 14.3 H9.7" stroke="#d8d8d8" stroke-width="0.8"/><circle cx="5.7" cy="9.2" r="1.5" fill="none" stroke="#c8c8c8" stroke-width="0.8"/><path d="M7.2 9.4 Q7.2 12.6 4 13.6" fill="none" stroke="#c8c8c8" stroke-width="0.8"/></svg>
<div class="t" style="left:1445.89px;top:571.80px;font-size:13px;color:#222;">1</div>
<div class="t" style="left:1515.89px;top:571.80px;font-size:13px;color:#222;">3</div>
<svg class="a" style="left:1570px;top:569px;" width="16" height="19" viewBox="0 0 16 19"><path d="M1 0.8 H10.4 L15.2 5.6 V18.2 H1Z" fill="#fff" stroke="#9a9a9a" stroke-width="1.4" stroke-linejoin="round"/><path d="M10.4 1.2 V5.6 H14.8" fill="none" stroke="#9a9a9a" stroke-width="1.1"/><g fill="#9a9a9a"><rect x="5" y="1.2" width="1.6" height="1.3"/><rect x="6.6" y="2.5" width="1.6" height="1.3"/><rect x="5" y="3.8" width="1.6" height="1.3"/><rect x="6.6" y="5.1" width="1.6" height="1.3"/><rect x="5" y="6.4" width="1.6" height="1.3"/></g><path d="M5.3 8.2 H7.9 L8.9 13.2 Q9 15.6 6.6 15.6 Q4.2 15.6 4.3 13.2Z" fill="#9a9a9a"/><ellipse cx="6.6" cy="13.4" rx="1.3" ry="1.1" fill="#fff"/></svg>
<div class="t" style="left:1593.64px;top:571.80px;font-size:13px;color:#222;">0</div>
<div class="t" style="left:1647.27px;top:571.80px;font-size:13px;color:#222;">16</div>
<div class="t" style="left:1705.89px;top:571.80px;font-size:13px;color:#222;">1</div>
<div class="t" style="left:1750.89px;top:571.80px;font-size:13px;color:#222;">3</div>
<div class="t" style="left:1800.89px;top:571.80px;font-size:13px;color:#222;">3</div>
<svg class="a" style="left:1843px;top:571px;" width="17" height="16" viewBox="0 0 17 16"><path d="M2.6 11.2 L11.6 2.2 L14.8 5.4 L5.8 14.4Z" fill="#9a9a9a"/><path d="M12.3 1.5 L13.6 0.2 L16.8 3.4 L15.5 4.7Z" fill="#9a9a9a"/><path d="M2.1 12 L0.6 16.4 L5 14.9Z" fill="#9a9a9a"/><path d="M2.2 13.4 L1.6 15.4 L3.6 14.8Z" fill="#fff"/><path d="M4.2 11.8 L12 4" stroke="#fff" stroke-width="0.6" stroke-dasharray="1 1"/></svg>
<svg class="a" style="left:1867px;top:570px;" width="17" height="18" viewBox="0 0 17 18"><rect x="0.8" y="2.5" width="15.4" height="15" fill="#9a9a9a"/><g fill="#fff"><rect x="1.6" y="6.4" width="2.9" height="2.7"/><rect x="5.4" y="6.4" width="2.9" height="2.7"/><rect x="9.2" y="6.4" width="2.9" height="2.7"/><rect x="13.0" y="6.4" width="2.9" height="2.7"/><rect x="1.6" y="10.0" width="2.9" height="2.7"/><rect x="5.4" y="10.0" width="2.9" height="2.7"/><rect x="9.2" y="10.0" width="2.9" height="2.7"/><rect x="13.0" y="10.0" width="2.9" height="2.7"/><rect x="1.6" y="13.6" width="2.9" height="2.7"/><rect x="5.4" y="13.6" width="2.9" height="2.7"/><rect x="9.2" y="13.6" width="2.9" height="2.7"/><rect x="13.0" y="13.6" width="2.9" height="2.7"/></g><rect x="3.3" y="0.3" width="2.4" height="4" rx="1" fill="#9a9a9a"/><rect x="11.2" y="0.3" width="2.4" height="4" rx="1" fill="#9a9a9a"/></svg>
<svg class="a" style="left:1890.5px;top:571px;" width="17" height="16" viewBox="0 0 17 16"><path d="M3.5 1 H11.5 L13.5 3 V7 H3.5Z" fill="none" stroke="#9a9a9a" stroke-width="1.5"/><rect x="0.5" y="6.5" width="16" height="6.5" rx="1" fill="#9a9a9a"/><rect x="3.5" y="10.5" width="10" height="4.5" fill="#fff" stroke="#9a9a9a" stroke-width="1.5"/></svg>
<svg class="a" style="left:281px;top:614px;" width="18" height="15" viewBox="0 0 18 15"><path d="M1.5 7.5 L6.5 12.5 L16.5 2.5" fill="none" stroke="#008000" stroke-width="3.6"/></svg>
<div class="t" style="left:332.30px;top:616.20px;font-size:13px;color:#222;letter-spacing:-0.120px;">Luxury Mansion by the Ocean</div>
<div class="t" style="left:769.00px;top:616.20px;font-size:13px;color:#222;letter-spacing:-0.120px;">Luxury Mansion by the Ocean</div>
<div class="t" style="left:1212.49px;top:616.20px;font-size:13px;color:#222;">Instant</div>
<svg class="a" style="left:1283px;top:615px;" width="16" height="16" viewBox="0 0 16 16"><circle cx="8" cy="8" r="7.9" fill="#008000"/><path d="M2.8 3.2 Q4.8 1.6 7.5 2 L8.6 3.9 L10.4 4.1 L12.1 5 L12.4 6.8 L10 7.8 L8.4 9 L7.6 10.8 Q6.8 9.8 5.8 8.2 L3.7 5.9 Z" fill="#fff"/><path d="M9.7 11.1 L12.4 12.2 L11.6 13.9 L10 13.2Z" fill="#fff"/></svg>
<svg class="a" style="left:1306px;top:614px;" width="18" height="18" viewBox="0 0 18 18"><rect x="0" y="0" width="18" height="18" rx="4.2" fill="#808080"/><path d="M9 13.8 Q6.6 11.2 7 9.6 Q7.3 8.1 9 8.1 Q10.7 8.1 11 9.6 Q11.4 11.2 9 13.8 Q6 16.8 3.6 16.6 Q1.2 16.2 1.9 13.2 L7 3.2 Q7.9 1.3 9 1.3 Q10.1 1.3 11 3.2 L16.1 13.2 Q16.8 16.2 14.4 16.6 Q12 16.8 9 13.8Z" fill="none" stroke="#fff" stroke-width="1.25" stroke-linejoin="round"/></svg>
<svg class="a" style="left:1330px;top:614px;" width="18" height="18" viewBox="0 0 18 18"><rect x="0" y="0" width="18" height="18" rx="4.2" fill="#808080"/><path d="M0.9 4.4 Q0.9 1 4.2 1 H8.2 Q11.7 1 11.7 4.6 Q11.7 6.8 10.1 7.8 Q12.4 8.8 12.4 12 Q12.4 16.6 8.2 16.6 H4.2 Q0.9 16.6 0.9 13.4Z" fill="#fff"/><rect x="3.9" y="3.9" width="4.1" height="3.2" rx="1" fill="#808080"/><rect x="3.9" y="10.1" width="4.7" height="3.2" rx="1" fill="#808080"/><circle cx="14.8" cy="14.8" r="1.75" fill="#fff"/></svg>
<svg class="a" style="left:1354px;top:614px;" width="18" height="18" viewBox="0 0 18 18"><rect x="0" y="0" width="18" height="18" rx="4.2" fill="#808080"/><path d="M6.2 1.9 H13.3 L16.8 6.6 H9.9Z" fill="#f4f4f4"/><rect x="9.7" y="6.6" width="7.1" height="9.6" fill="#f4f4f4"/><g fill="#808080"><rect x="11.2" y="8.3" width="1.8" height="2.1"/><rect x="13.3" y="8.3" width="1.7" height="2.1"/><rect x="11.2" y="10.7" width="1.8" height="2"/><rect x="13.3" y="10.7" width="1.7" height="2"/></g><path d="M1.4 16.2 V7.6 L5.9 3.1 L9.7 7 V16.2" fill="none" stroke="#f0f0f0" stroke-width="0.9"/><path d="M1.4 14.3 H9.7" stroke="#d8d8d8" stroke-width="0.8"/><circle cx="5.7" cy="9.2" r="1.5" fill="none" stroke="#c8c8c8" stroke-width="0.8"/><path d="M7.2 9.4 Q7.2 12.6 4 13.6" fill="none" stroke="#c8c8c8" stroke-width="0.8"/></svg>
<div class="t" style="left:1445.89px;top:616.20px;font-size:13px;color:#222;">2</div>
<div class="t" style="left:1512.27px;top:616.20px;font-size:13px;color:#222;">19</div>
<svg class="a" style="left:1567px;top:613px;" width="16" height="19" viewBox="0 0 16 19"><path d="M1 0.8 H10.4 L15.2 5.6 V18.2 H1Z" fill="#fff" stroke="#9a9a9a" stroke-width="1.4" stroke-linejoin="round"/><path d="M10.4 1.2 V5.6 H14.8" fill="none" stroke="#9a9a9a" stroke-width="1.1"/><g fill="#9a9a9a"><rect x="5" y="1.2" width="1.6" height="1.3"/><rect x="6.6" y="2.5" width="1.6" height="1.3"/><rect x="5" y="3.8" width="1.6" height="1.3"/><rect x="6.6" y="5.1" width="1.6" height="1.3"/><rect x="5" y="6.4" width="1.6" height="1.3"/></g><path d="M5.3 8.2 H7.9 L8.9 13.2 Q9 15.6 6.6 15.6 Q4.2 15.6 4.3 13.2Z" fill="#9a9a9a"/><ellipse cx="6.6" cy="13.4" rx="1.3" ry="1.1" fill="#fff"/></svg>
<div class="t" style="left:1590.02px;top:616.20px;font-size:13px;color:#222;">12</div>
<div class="t" style="left:1647.27px;top:616.20px;font-size:13px;color:#222;">17</div>
<div class="t" style="left:1705.89px;top:616.20px;font-size:13px;color:#222;">5</div>
<div class="t" style="left:1747.75px;top:616.20px;font-size:13px;color:#222;">11</div>
<div class="t" style="left:1797.27px;top:616.20px;font-size:13px;color:#222;">15</div>
<svg class="a" style="left:1843px;top:615px;" width="17" height="16" viewBox="0 0 17 16"><path d="M2.6 11.2 L11.6 2.2 L14.8 5.4 L5.8 14.4Z" fill="#9a9a9a"/><path d="M12.3 1.5 L13.6 0.2 L16.8 3.4 L15.5 4.7Z" fill="#9a9a9a"/><path d="M2.1 12 L0.6 16.4 L5 14.9Z" fill="#9a9a9a"/><path d="M2.2 13.4 L1.6 15.4 L3.6 14.8Z" fill="#fff"/><path d="M4.2 11.8 L12 4" stroke="#fff" stroke-width="0.6" stroke-dasharray="1 1"/></svg>
<svg class="a" style="left:1867px;top:614px;" width="17" height="18" viewBox="0 0 17 18"><rect x="0.8" y="2.5" width="15.4" height="15" fill="#9a9a9a"/><g fill="#fff"><rect x="1.6" y="6.4" width="2.9" height="2.7"/><rect x="5.4" y="6.4" width="2.9" height="2.7"/><rect x="9.2" y="6.4" width="2.9" height="2.7"/><rect x="13.0" y="6.4" width="2.9" height="2.7"/><rect x="1.6" y="10.0" width="2.9" height="2.7"/><rect x="5.4" y="10.0" width="2.9" height="2.7"/><rect x="9.2" y="10.0" width="2.9" height="2.7"/><rect x="13.0" y="10.0" width="2.9" height="2.7"/><rect x="1.6" y="13.6" width="2.9" height="2.7"/><rect x="5.4" y="13.6" width="2.9" height="2.7"/><rect x="9.2" y="13.6" width="2.9" height="2.7"/><rect x="13.0" y="13.6" width="2.9" height="2.7"/></g><rect x="3.3" y="0.3" width="2.4" height="4" rx="1" fill="#9a9a9a"/><rect x="11.2" y="0.3" width="2.4" height="4" rx="1" fill="#9a9a9a"/></svg>
<svg class="a" style="left:1890.5px;top:615px;" width="17" height="16" viewBox="0 0 17 16"><path d="M3.5 1 H11.5 L13.5 3 V7 H3.5Z" fill="none" stroke="#9a9a9a" stroke-width="1.5"/><rect x="0.5" y="6.5" width="16" height="6.5" rx="1" fill="#9a9a9a"/><rect x="3.5" y="10.5" width="10" height="4.5" fill="#fff" stroke="#9a9a9a" stroke-width="1.5"/></svg>
<svg class="a" style="left:281px;top:659px;" width="18" height="15" viewBox="0 0 18 15"><path d="M1.5 7.5 L6.5 12.5 L16.5 2.5" fill="none" stroke="#008000" stroke-width="3.6"/></svg>
<div class="t" style="left:332.30px;top:660.60px;font-size:13px;color:#222;letter-spacing:-0.122px;">Surfers Beach Shack</div>
<div class="t" style="left:769.00px;top:660.60px;font-size:13px;color:#222;letter-spacing:-0.122px;">Surfers Beach Shack</div>
<div class="t" style="left:1212.49px;top:660.60px;font-size:13px;color:#222;">Instant</div>
<svg class="a" style="left:1283px;top:660px;" width="16" height="16" viewBox="0 0 16 16"><circle cx="8" cy="8" r="7.9" fill="#008000"/><path d="M2.8 3.2 Q4.8 1.6 7.5 2 L8.6 3.9 L10.4 4.1 L12.1 5 L12.4 6.8 L10 7.8 L8.4 9 L7.6 10.8 Q6.8 9.8 5.8 8.2 L3.7 5.9 Z" fill="#fff"/><path d="M9.7 11.1 L12.4 12.2 L11.6 13.9 L10 13.2Z" fill="#fff"/></svg>
<svg class="a" style="left:1306px;top:659px;" width="18" height="18" viewBox="0 0 18 18"><rect x="0" y="0" width="18" height="18" rx="4.2" fill="#808080"/><path d="M9 13.8 Q6.6 11.2 7 9.6 Q7.3 8.1 9 8.1 Q10.7 8.1 11 9.6 Q11.4 11.2 9 13.8 Q6 16.8 3.6 16.6 Q1.2 16.2 1.9 13.2 L7 3.2 Q7.9 1.3 9 1.3 Q10.1 1.3 11 3.2 L16.1 13.2 Q16.8 16.2 14.4 16.6 Q12 16.8 9 13.8Z" fill="none" stroke="#fff" stroke-width="1.25" stroke-linejoin="round"/></svg>
<svg class="a" style="left:1330px;top:659px;" width="18" height="18" viewBox="0 0 18 18"><rect x="0" y="0" width="18" height="18" rx="4.2" fill="#808080"/><path d="M0.9 4.4 Q0.9 1 4.2 1 H8.2 Q11.7 1 11.7 4.6 Q11.7 6.8 10.1 7.8 Q12.4 8.8 12.4 12 Q12.4 16.6 8.2 16.6 H4.2 Q0.9 16.6 0.9 13.4Z" fill="#fff"/><rect x="3.9" y="3.9" width="4.1" height="3.2" rx="1" fill="#808080"/><rect x="3.9" y="10.1" width="4.7" height="3.2" rx="1" fill="#808080"/><circle cx="14.8" cy="14.8" r="1.75" fill="#fff"/></svg>
<svg class="a" style="left:1354px;top:659px;" width="18" height="18" viewBox="0 0 18 18"><rect x="0" y="0" width="18" height="18" rx="4.2" fill="#808080"/><path d="M6.2 1.9 H13.3 L16.8 6.6 H9.9Z" fill="#f4f4f4"/><rect x="9.7" y="6.6" width="7.1" height="9.6" fill="#f4f4f4"/><g fill="#808080"><rect x="11.2" y="8.3" width="1.8" height="2.1"/><rect x="13.3" y="8.3" width="1.7" height="2.1"/><rect x="11.2" y="10.7" width="1.8" height="2"/><rect x="13.3" y="10.7" width="1.7" height="2"/></g><path d="M1.4 16.2 V7.6 L5.9 3.1 L9.7 7 V16.2" fill="none" stroke="#f0f0f0" stroke-width="0.9"/><path d="M1.4 14.3 H9.7" stroke="#d8d8d8" stroke-width="0.8"/><circle cx="5.7" cy="9.2" r="1.5" fill="none" stroke="#c8c8c8" stroke-width="0.8"/><path d="M7.2 9.4 Q7.2 12.6 4 13.6" fill="none" stroke="#c8c8c8" stroke-width="0.8"/></svg>
<div class="t" style="left:1445.89px;top:660.60px;font-size:13px;color:#222;">1</div>
<div class="t" style="left:1515.89px;top:660.60px;font-size:13px;color:#222;">8</div>
<svg class="a" style="left:1570px;top:658px;" width="16" height="19" viewBox="0 0 16 19"><path d="M1 0.8 H10.4 L15.2 5.6 V18.2 H1Z" fill="#fff" stroke="#9a9a9a" stroke-width="1.4" stroke-linejoin="round"/><path d="M10.4 1.2 V5.6 H14.8" fill="none" stroke="#9a9a9a" stroke-width="1.1"/><g fill="#9a9a9a"><rect x="5" y="1.2" width="1.6" height="1.3"/><rect x="6.6" y="2.5" width="1.6" height="1.3"/><rect x="5" y="3.8" width="1.6" height="1.3"/><rect x="6.6" y="5.1" width="1.6" height="1.3"/><rect x="5" y="6.4" width="1.6" height="1.3"/></g><path d="M5.3 8.2 H7.9 L8.9 13.2 Q9 15.6 6.6 15.6 Q4.2 15.6 4.3 13.2Z" fill="#9a9a9a"/><ellipse cx="6.6" cy="13.4" rx="1.3" ry="1.1" fill="#fff"/></svg>
<div class="t" style="left:1593.64px;top:660.60px;font-size:13px;color:#222;">0</div>
<div class="t" style="left:1647.27px;top:660.60px;font-size:13px;color:#222;">16</div>
<div class="t" style="left:1705.89px;top:660.60px;font-size:13px;color:#222;">3</div>
<div class="t" style="left:1750.89px;top:660.60px;font-size:13px;color:#222;">2</div>
<div class="t" style="left:1797.27px;top:660.60px;font-size:13px;color:#222;">10</div>
<svg class="a" style="left:1843px;top:659px;" width="17" height="16" viewBox="0 0 17 16"><path d="M2.6 11.2 L11.6 2.2 L14.8 5.4 L5.8 14.4Z" fill="#9a9a9a"/><path d="M12.3 1.5 L13.6 0.2 L16.8 3.4 L15.5 4.7Z" fill="#9a9a9a"/><path d="M2.1 12 L0.6 16.4 L5 14.9Z" fill="#9a9a9a"/><path d="M2.2 13.4 L1.6 15.4 L3.6 14.8Z" fill="#fff"/><path d="M4.2 11.8 L12 4" stroke="#fff" stroke-width="0.6" stroke-dasharray="1 1"/></svg>
<svg class="a" style="left:1867px;top:658px;" width="17" height="18" viewBox="0 0 17 18"><rect x="0.8" y="2.5" width="15.4" height="15" fill="#9a9a9a"/><g fill="#fff"><rect x="1.6" y="6.4" width="2.9" height="2.7"/><rect x="5.4" y="6.4" width="2.9" height="2.7"/><rect x="9.2" y="6.4" width="2.9" height="2.7"/><rect x="13.0" y="6.4" width="2.9" height="2.7"/><rect x="1.6" y="10.0" width="2.9" height="2.7"/><rect x="5.4" y="10.0" width="2.9" height="2.7"/><rect x="9.2" y="10.0" width="2.9" height="2.7"/><rect x="13.0" y="10.0" width="2.9" height="2.7"/><rect x="1.6" y="13.6" width="2.9" height="2.7"/><rect x="5.4" y="13.6" width="2.9" height="2.7"/><rect x="9.2" y="13.6" width="2.9" height="2.7"/><rect x="13.0" y="13.6" width="2.9" height="2.7"/></g><rect x="3.3" y="0.3" width="2.4" height="4" rx="1" fill="#9a9a9a"/><rect x="11.2" y="0.3" width="2.4" height="4" rx="1" fill="#9a9a9a"/></svg>
<svg class="a" style="left:1890.5px;top:659px;" width="17" height="16" viewBox="0 0 17 16"><path d="M3.5 1 H11.5 L13.5 3 V7 H3.5Z" fill="none" stroke="#9a9a9a" stroke-width="1.5"/><rect x="0.5" y="6.5" width="16" height="6.5" rx="1" fill="#9a9a9a"/><rect x="3.5" y="10.5" width="10" height="4.5" fill="#fff" stroke="#9a9a9a" stroke-width="1.5"/></svg>
<svg class="a" style="left:281px;top:703px;" width="18" height="15" viewBox="0 0 18 15"><path d="M1.5 7.5 L6.5 12.5 L16.5 2.5" fill="none" stroke="#008000" stroke-width="3.6"/></svg>
<div class="t" style="left:332.30px;top:705.00px;font-size:13px;color:#222;letter-spacing:-0.120px;">Surfers Paradise Dream</div>
<div class="t" style="left:769.00px;top:705.00px;font-size:13px;color:#222;letter-spacing:-0.120px;">Surfers Paradise Dream</div>
<div class="t" style="left:1212.49px;top:705.00px;font-size:13px;color:#222;">Instant</div>
<svg class="a" style="left:1283px;top:704px;" width="16" height="16" viewBox="0 0 16 16"><circle cx="8" cy="8" r="7.9" fill="#008000"/><path d="M2.8 3.2 Q4.8 1.6 7.5 2 L8.6 3.9 L10.4 4.1 L12.1 5 L12.4 6.8 L10 7.8 L8.4 9 L7.6 10.8 Q6.8 9.8 5.8 8.2 L3.7 5.9 Z" fill="#fff"/><path d="M9.7 11.1 L12.4 12.2 L11.6 13.9 L10 13.2Z" fill="#fff"/></svg>
<svg class="a" style="left:1306px;top:703px;" width="18" height="18" viewBox="0 0 18 18"><rect x="0" y="0" width="18" height="18" rx="4.2" fill="#808080"/><path d="M9 13.8 Q6.6 11.2 7 9.6 Q7.3 8.1 9 8.1 Q10.7 8.1 11 9.6 Q11.4 11.2 9 13.8 Q6 16.8 3.6 16.6 Q1.2 16.2 1.9 13.2 L7 3.2 Q7.9 1.3 9 1.3 Q10.1 1.3 11 3.2 L16.1 13.2 Q16.8 16.2 14.4 16.6 Q12 16.8 9 13.8Z" fill="none" stroke="#fff" stroke-width="1.25" stroke-linejoin="round"/></svg>
<svg class="a" style="left:1330px;top:703px;" width="18" height="18" viewBox="0 0 18 18"><rect x="0" y="0" width="18" height="18" rx="4.2" fill="#808080"/><path d="M0.9 4.4 Q0.9 1 4.2 1 H8.2 Q11.7 1 11.7 4.6 Q11.7 6.8 10.1 7.8 Q12.4 8.8 12.4 12 Q12.4 16.6 8.2 16.6 H4.2 Q0.9 16.6 0.9 13.4Z" fill="#fff"/><rect x="3.9" y="3.9" width="4.1" height="3.2" rx="1" fill="#808080"/><rect x="3.9" y="10.1" width="4.7" height="3.2" rx="1" fill="#808080"/><circle cx="14.8" cy="14.8" r="1.75" fill="#fff"/></svg>
<svg class="a" style="left:1354px;top:703px;" width="18" height="18" viewBox="0 0 18 18"><rect x="0" y="0" width="18" height="18" rx="4.2" fill="#808080"/><path d="M6.2 1.9 H13.3 L16.8 6.6 H9.9Z" fill="#f4f4f4"/><rect x="9.7" y="6.6" width="7.1" height="9.6" fill="#f4f4f4"/><g fill="#808080"><rect x="11.2" y="8.3" width="1.8" height="2.1"/><rect x="13.3" y="8.3" width="1.7" height="2.1"/><rect x="11.2" y="10.7" width="1.8" height="2"/><rect x="13.3" y="10.7" width="1.7" height="2"/></g><path d="M1.4 16.2 V7.6 L5.9 3.1 L9.7 7 V16.2" fill="none" stroke="#f0f0f0" stroke-width="0.9"/><path d="M1.4 14.3 H9.7" stroke="#d8d8d8" stroke-width="0.8"/><circle cx="5.7" cy="9.2" r="1.5" fill="none" stroke="#c8c8c8" stroke-width="0.8"/><path d="M7.2 9.4 Q7.2 12.6 4 13.6" fill="none" stroke="#c8c8c8" stroke-width="0.8"/></svg>
<div class="t" style="left:1445.89px;top:705.00px;font-size:13px;color:#222;">2</div>
<div class="t" style="left:1515.89px;top:705.00px;font-size:13px;color:#222;">1</div>
<svg class="a" style="left:1570px;top:702px;" width="16" height="19" viewBox="0 0 16 19"><path d="M1 0.8 H10.4 L15.2 5.6 V18.2 H1Z" fill="#fff" stroke="#9a9a9a" stroke-width="1.4" stroke-linejoin="round"/><path d="M10.4 1.2 V5.6 H14.8" fill="none" stroke="#9a9a9a" stroke-width="1.1"/><g fill="#9a9a9a"><rect x="5" y="1.2" width="1.6" height="1.3"/><rect x="6.6" y="2.5" width="1.6" height="1.3"/><rect x="5" y="3.8" width="1.6" height="1.3"/><rect x="6.6" y="5.1" width="1.6" height="1.3"/><rect x="5" y="6.4" width="1.6" height="1.3"/></g><path d="M5.3 8.2 H7.9 L8.9 13.2 Q9 15.6 6.6 15.6 Q4.2 15.6 4.3 13.2Z" fill="#9a9a9a"/><ellipse cx="6.6" cy="13.4" rx="1.3" ry="1.1" fill="#fff"/></svg>
<div class="t" style="left:1593.64px;top:705.00px;font-size:13px;color:#222;">0</div>
<div class="t" style="left:1647.27px;top:705.00px;font-size:13px;color:#222;">14</div>
<div class="t" style="left:1705.89px;top:705.00px;font-size:13px;color:#222;">3</div>
<div class="t" style="left:1750.89px;top:705.00px;font-size:13px;color:#222;">4</div>
<div class="t" style="left:1800.89px;top:705.00px;font-size:13px;color:#222;">8</div>
<svg class="a" style="left:1843px;top:704px;" width="17" height="16" viewBox="0 0 17 16"><path d="M2.6 11.2 L11.6 2.2 L14.8 5.4 L5.8 14.4Z" fill="#9a9a9a"/><path d="M12.3 1.5 L13.6 0.2 L16.8 3.4 L15.5 4.7Z" fill="#9a9a9a"/><path d="M2.1 12 L0.6 16.4 L5 14.9Z" fill="#9a9a9a"/><path d="M2.2 13.4 L1.6 15.4 L3.6 14.8Z" fill="#fff"/><path d="M4.2 11.8 L12 4" stroke="#fff" stroke-width="0.6" stroke-dasharray="1 1"/></svg>
<svg class="a" style="left:1867px;top:703px;" width="17" height="18" viewBox="0 0 17 18"><rect x="0.8" y="2.5" width="15.4" height="15" fill="#9a9a9a"/><g fill="#fff"><rect x="1.6" y="6.4" width="2.9" height="2.7"/><rect x="5.4" y="6.4" width="2.9" height="2.7"/><rect x="9.2" y="6.4" width="2.9" height="2.7"/><rect x="13.0" y="6.4" width="2.9" height="2.7"/><rect x="1.6" y="10.0" width="2.9" height="2.7"/><rect x="5.4" y="10.0" width="2.9" height="2.7"/><rect x="9.2" y="10.0" width="2.9" height="2.7"/><rect x="13.0" y="10.0" width="2.9" height="2.7"/><rect x="1.6" y="13.6" width="2.9" height="2.7"/><rect x="5.4" y="13.6" width="2.9" height="2.7"/><rect x="9.2" y="13.6" width="2.9" height="2.7"/><rect x="13.0" y="13.6" width="2.9" height="2.7"/></g><rect x="3.3" y="0.3" width="2.4" height="4" rx="1" fill="#9a9a9a"/><rect x="11.2" y="0.3" width="2.4" height="4" rx="1" fill="#9a9a9a"/></svg>
<svg class="a" style="left:1890.5px;top:704px;" width="17" height="16" viewBox="0 0 17 16"><path d="M3.5 1 H11.5 L13.5 3 V7 H3.5Z" fill="none" stroke="#9a9a9a" stroke-width="1.5"/><rect x="0.5" y="6.5" width="16" height="6.5" rx="1" fill="#9a9a9a"/><rect x="3.5" y="10.5" width="10" height="4.5" fill="#fff" stroke="#9a9a9a" stroke-width="1.5"/></svg>
<div class="a" style="left:0;top:0;width:1919px;height:880px;z-index:10;">
<svg class="a" style="left:372px;top:119px;filter:drop-shadow(1px 2px 1.5px rgba(0,0,0,0.22));" width="34" height="34" viewBox="0 0 34 34"><circle cx="16.5" cy="16.5" r="15.6" fill="#0b7cff"/></svg>
<div class="t" style="left:382.00px;top:127.06px;font-size:16px;color:#fff;letter-spacing:-0.792px;">10</div>
<svg class="a" style="left:405px;top:126px;filter:drop-shadow(2px 3px 2px rgba(0,0,0,0.4));" width="54" height="20" viewBox="0 0 54 20"><path d="M2 7.2 H29 V2 L51.5 9.3 L29 17 V11.5 H2Z" fill="#0b7cff"/></svg>
<svg class="a" style="left:458px;top:121px;filter:drop-shadow(2px 3px 2px rgba(0,0,0,0.4));" width="30" height="30" viewBox="0 0 30 30"><circle cx="15" cy="15" r="11.8" fill="none" stroke="#0b7cff" stroke-width="2.5"/></svg>
<svg class="a" style="left:465px;top:129px;" width="16" height="15" viewBox="0 0 16 15"><path d="M2.2 7 A5.8 5.8 0 0 1 12.2 4.2" fill="none" stroke="#5cbcb8" stroke-width="2.2"/><path d="M9.2 5.6 L14.6 5.6 L14.6 0.4 Z" fill="#5cbcb8"/><path d="M13.3 8 A5.8 5.8 0 0 1 3.3 10.8" fill="none" stroke="#5cbcb8" stroke-width="2.2"/><path d="M6.3 9.4 L0.9 9.4 L0.9 14.6 Z" fill="#5cbcb8"/></svg>
<div class="a" style="left:985.5px;top:646.2px;width:211.7px;height:35.6px;background:#fff;border:2px solid #0b7cff;box-shadow:3px 3px 3px rgba(0,0,0,0.35);"></div>
<div class="t" style="left:999.50px;top:659.65px;font-size:13.7px;color:#111;letter-spacing:0.016px;">Globe world icon is now Active</div>
<svg class="a" style="left:1200px;top:656px;filter:drop-shadow(2px 3px 2px rgba(0,0,0,0.4));" width="80" height="20" viewBox="0 0 80 20"><path d="M2 8.5 H54 V2.2 L76.5 9.5 L54 17.6 V12.1 H2Z" fill="#0b7cff"/></svg>
<svg class="a" style="left:1276px;top:651px;filter:drop-shadow(2px 3px 2px rgba(0,0,0,0.4));" width="30" height="30" viewBox="0 0 30 30"><circle cx="14.8" cy="14.6" r="10.7" fill="none" stroke="#0b7cff" stroke-width="2.3"/></svg>
</div>
</body></html>
